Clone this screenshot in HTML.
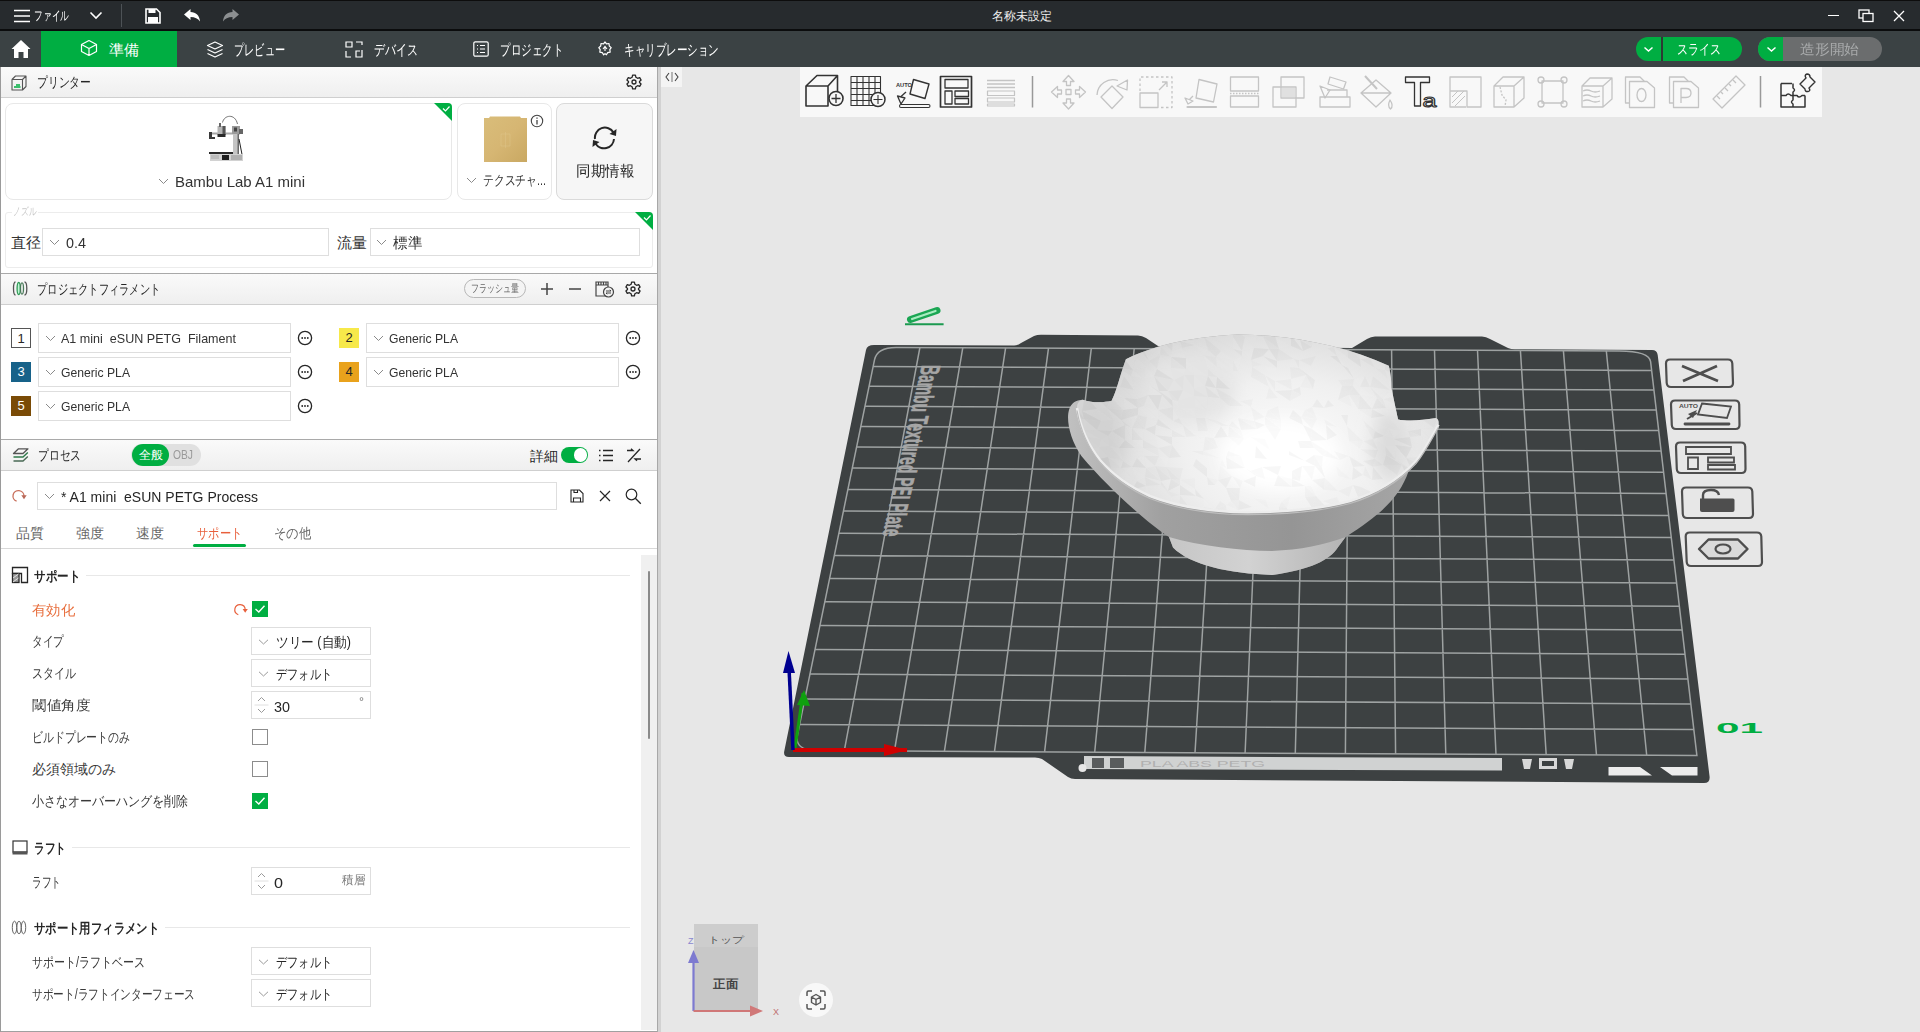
<!DOCTYPE html>
<html><head><meta charset="utf-8">
<style>
*{box-sizing:border-box;margin:0;padding:0}
html,body{width:1920px;height:1032px;overflow:hidden;background:#e7e7e7;font-family:"Liberation Sans",sans-serif;color:#262626}
.a{position:absolute}
.t{position:absolute;white-space:nowrap;line-height:1}
#title{left:0;top:0;width:1920px;height:30px;background:#272b2e;border-top:1px solid #0d0d0d;border-bottom:1px solid #0b0c0d}
#tabs{left:0;top:30px;width:1920px;height:37px;background:#3b4244;border-top:1px solid #0b0c0d}
#left{left:0;top:67px;width:657px;height:965px;background:#fff}
#divl{left:657px;top:67px;width:1px;height:965px;background:#a8a8a8}
#divr{left:658px;top:67px;width:3px;height:965px;background:#d2d2d2}
.hdr{position:absolute;left:1px;width:656px;height:31px;background:linear-gradient(#fafafa,#efefef);border-bottom:1px solid #cfcfcf}
.hdr .t{font-size:14px;color:#262626}
.inp{position:absolute;border:1px solid #dedede;background:#fff;height:29px}
.chev{position:absolute;width:7px;height:7px;border-right:1px solid #9a9a9a;border-bottom:1px solid #9a9a9a;transform:rotate(45deg)}
.lbl{position:absolute;font-size:14px;color:#3a3a3a;white-space:nowrap;line-height:1}
.cb{position:absolute;width:17px;height:17px;border:1px solid #8a8a8a;background:#fff}
.cbon{background:#00ae42;border-color:#00ae42}
.sec{position:absolute;height:1px;background:#ececec}
</style></head><body>
<div id="title" class="a">
 <svg class="a" style="left:13px;top:7px" width="18" height="16" viewBox="0 0 18 16"><path d="M1 2.5H17M1 8H17M1 13.5H17" stroke="#fff" stroke-width="1.6"/></svg>
 <div class="t fit" style="left:34px;top:8px;font-size:13px;color:#fff;--w:35px">ファイル</div>
 <svg class="a" style="left:89px;top:10px" width="14" height="9" viewBox="0 0 14 9"><path d="M1.5 1.5L7 7L12.5 1.5" stroke="#fff" stroke-width="1.6" fill="none"/></svg>
 <div class="a" style="left:121px;top:3px;width:1px;height:23px;background:#4d5256"></div>
 <svg class="a" style="left:144px;top:6px" width="18" height="18" viewBox="0 0 18 18"><path d="M2 2H12.5L16 5.5V16H2Z" stroke="#fff" stroke-width="1.6" fill="none"/><rect x="4.5" y="2" width="7" height="4" fill="#fff"/><rect x="4" y="10" width="10" height="6" fill="#fff"/></svg>
 <svg class="a" style="left:183px;top:7px" width="18" height="16" viewBox="0 0 18 16"><path d="M1 6.5L7.5 1V4C13 4 16.5 7.5 17 13.5C15 10.5 12 9 7.5 9V12Z" fill="#fff"/></svg>
 <svg class="a" style="left:222px;top:7px" width="18" height="16" viewBox="0 0 18 16"><path d="M17 6.5L10.5 1V4C5 4 1.5 7.5 1 13.5C3 10.5 6 9 10.5 9V12Z" fill="#8c8f91"/></svg>
 <div class="t" style="left:992px;top:9px;font-size:12px;color:#f0f0f0">名称未設定</div>
 <div class="a" style="left:1828px;top:14px;width:11px;height:1px;background:#fff"></div>
 <svg class="a" style="left:1858px;top:8px" width="17" height="14" viewBox="0 0 17 14"><rect x="1" y="1" width="10" height="8" stroke="#fff" stroke-width="1.3" fill="none"/><rect x="5" y="4.5" width="10" height="8" stroke="#fff" stroke-width="1.3" fill="#262a2d"/></svg>
 <svg class="a" style="left:1893px;top:9px" width="12" height="12" viewBox="0 0 12 12"><path d="M1 1L11 11M11 1L1 11" stroke="#fff" stroke-width="1.3"/></svg>
</div>
<div id="tabs" class="a">
 <svg class="a" style="left:11px;top:8px" width="20" height="20" viewBox="0 0 20 20"><path d="M10 1L19.5 10H17V19H12.5V13H7.5V19H3V10H0.5Z" fill="#fff"/></svg>
 <div class="a" style="left:41px;top:0;width:136px;height:36px;background:#00ae42"></div>
 <svg class="a" style="left:80px;top:8px" width="18" height="18" viewBox="0 0 18 18"><path d="M9 1.5L16.5 5.5V12.5L9 16.5L1.5 12.5V5.5Z M1.5 5.5L9 9.5L16.5 5.5 M9 9.5V16.5" stroke="#fff" stroke-width="1.2" fill="none" stroke-linejoin="round"/></svg>
 <div class="t fit" style="left:109px;top:11px;font-size:15px;color:#fff;--w:30px">準備</div>
 <svg class="a" style="left:206px;top:10px" width="18" height="17" viewBox="0 0 18 17"><path d="M9 1L16.5 4.5L9 8L1.5 4.5Z M1.5 8.5L9 12L16.5 8.5 M1.5 12.5L9 16L16.5 12.5" stroke="#fff" stroke-width="1.2" fill="none" stroke-linejoin="round"/></svg>
 <div class="t fit" style="left:234px;top:11px;font-size:15px;color:#fff;--w:51px">プレビュー</div>
 <svg class="a" style="left:345px;top:10px" width="18" height="17" viewBox="0 0 18 17"><path d="M1 1H7V6H1Z M11 1H17V4 M17 9V16H11V10H15 M1 10V16H6" stroke="#fff" stroke-width="1.2" fill="none"/></svg>
 <div class="t fit" style="left:374px;top:11px;font-size:15px;color:#fff;--w:44px">デバイス</div>
 <svg class="a" style="left:473px;top:10px" width="16" height="16" viewBox="0 0 16 16"><rect x="0.8" y="0.8" width="14.4" height="14.4" rx="1.5" stroke="#fff" stroke-width="1.2" fill="none"/><path d="M4 4.5H5M4 8H5M4 11.5H5M7 4.5H12M7 8H12M7 11.5H12" stroke="#fff" stroke-width="1.2"/></svg>
 <div class="t fit" style="left:500px;top:11px;font-size:15px;color:#fff;--w:63px">プロジェクト</div>
 <svg class="a" style="left:598px;top:10px" width="14" height="15" viewBox="0 0 14 15"><path d="M7 1L8.5 2.8L11 2.5L11.3 5L13.2 6.6L11.8 8.6L12.2 11.2L9.7 11.6L8.4 13.8L7 12.6L5.6 13.8L4.3 11.6L1.8 11.2L2.2 8.6L0.8 6.6L2.7 5L3 2.5L5.5 2.8Z" stroke="#fff" stroke-width="1.2" fill="none" stroke-linejoin="round"/><path d="M5 8L7 5.5L9 8M7 5.5V10" stroke="#fff" stroke-width="1.1" fill="none"/></svg>
 <div class="t fit" style="left:624px;top:11px;font-size:15px;color:#fff;--w:95px">キャリブレーション</div>
 <div class="a" style="left:1636px;top:6px;width:106px;height:24px;border-radius:12px;background:#00ae42"></div>
 <div class="a" style="left:1661px;top:6px;width:2px;height:24px;background:#2d3a33"></div>
 <svg class="a" style="left:1643px;top:15px" width="11" height="7" viewBox="0 0 11 7"><path d="M1.5 1.5L5.5 5L9.5 1.5" stroke="#fff" stroke-width="1.5" fill="none"/></svg>
 <div class="t fit" style="left:1677px;top:11px;font-size:14px;color:#fff;--w:44px">スライス</div>
 <div class="a" style="left:1758px;top:6px;width:124px;height:24px;border-radius:12px;background:#6b6d6e"></div>
 <div class="a" style="left:1758px;top:6px;width:25px;height:24px;border-radius:12px 0 0 12px;background:#00ae42"></div>
 <svg class="a" style="left:1766px;top:15px" width="11" height="7" viewBox="0 0 11 7"><path d="M1.5 1.5L5.5 5L9.5 1.5" stroke="#fff" stroke-width="1.5" fill="none"/></svg>
 <div class="t fit" style="left:1800px;top:11px;font-size:14px;color:#a9abac;--w:59px">造形開始</div>
</div>
<div id="left" class="a">
 <!-- printer header -->
 <div class="hdr" style="top:0">
  <svg class="a" style="left:10px;top:8px" width="16" height="16" viewBox="0 0 16 16"><path d="M1 4.5H11.5V15H1Z M1 4.5L4.5 1H15V11.5L11.5 15 M11.5 4.5L15 1" stroke="#555" stroke-width="1.1" fill="none" stroke-linejoin="round"/><path d="M3 12H9.5M5 10L9 10" stroke="#00ae42" stroke-width="1.4"/></svg>
  <div class="t fit" style="left:36px;top:8px;--w:54px">プリンター</div>
  <svg class="a" style="left:625px;top:7px" width="16" height="16" viewBox="0 0 16 16"><path d="M6.6 1.2H9.4L9.9 3.3L11.6 4.3L13.7 3.6L15.1 6.1L13.5 7.5V8.5L15.1 9.9L13.7 12.4L11.6 11.7L9.9 12.7L9.4 14.8H6.6L6.1 12.7L4.4 11.7L2.3 12.4L0.9 9.9L2.5 8.5V7.5L0.9 6.1L2.3 3.6L4.4 4.3L6.1 3.3Z" stroke="#262626" stroke-width="1.3" fill="none" stroke-linejoin="round"/><circle cx="8" cy="8" r="2" stroke="#262626" stroke-width="1.3" fill="none"/></svg>
 </div>
 <!-- printer card -->
 <div class="a" style="left:5px;top:36px;width:447px;height:97px;border:1px solid #e8e8e8;border-radius:8px;background:#fff"></div>
 <svg class="a" style="left:434px;top:36px" width="18" height="18" viewBox="0 0 18 18"><path d="M0 0H14Q18 0 18 4V18Z" fill="#00ae42"/><path d="M9 5.5L11.5 8L15.5 3.5" stroke="#fff" stroke-width="1.2" fill="none"/></svg>
 <svg class="a" style="left:207px;top:46px" width="40" height="52" viewBox="0 0 40 52">
  <path d="M15.5,9.5 C17,2 28,0 30.5,11" stroke="#666" stroke-width="0.9" fill="none"/>
  <rect x="3" y="19.5" width="30" height="2" fill="#a8a8a8"/>
  <rect x="2" y="19" width="3" height="6" fill="#3a3a3a"/><rect x="2" y="24" width="6" height="2" fill="#3a3a3a"/>
  <rect x="10.5" y="13" width="8" height="9" fill="#b5b5b5"/><rect x="15.5" y="13" width="3" height="9" fill="#555"/><rect x="10.5" y="21" width="8" height="3" fill="#2a2a2a"/>
  <rect x="12" y="10" width="2" height="4" fill="#666"/>
  <rect x="26" y="13" width="6" height="32" fill="#c4c4c4"/><rect x="30.5" y="13" width="1.5" height="32" fill="#6a6a6a"/>
  <rect x="25" y="13" width="8" height="8" fill="#9a9a9a"/><rect x="27" y="14.5" width="3" height="4" fill="#444"/>
  <rect x="32" y="16" width="4" height="5" fill="#666"/>
  <path d="M32,26 L35.5,44" stroke="#222" stroke-width="1"/>
  <rect x="2" y="39" width="24" height="2" fill="#2a2a2a"/>
  <rect x="3" y="41" width="33" height="7" fill="#d2d2d2"/><rect x="15" y="42" width="7" height="5" fill="#1e1e1e"/><rect x="4" y="42" width="8" height="4" fill="#bdbdbd"/><rect x="24" y="42" width="11" height="5" fill="#b0b0b0"/>
 </svg>
 <svg class="a" style="left:158px;top:111px" width="11" height="7" viewBox="0 0 11 7"><path d="M1 1L5.5 5.5L10 1" stroke="#8a8a8a" stroke-width="1" fill="none"/></svg>
 <div class="t fit" style="left:175px;top:107px;font-size:15px;color:#333;--w:130px">Bambu Lab A1 mini</div>
 <!-- plate card -->
 <div class="a" style="left:457px;top:36px;width:95px;height:97px;border:1px solid #e8e8e8;border-radius:8px;background:#fff"></div>
 <svg class="a" style="left:483px;top:49px" width="45" height="47" viewBox="0 0 45 47"><defs><linearGradient id="plg" x1="0" y1="0" x2="1" y2="1"><stop offset="0" stop-color="#d9bd7a"/><stop offset="0.5" stop-color="#d6b673"/><stop offset="1" stop-color="#c9a862"/></linearGradient></defs><path d="M1,2 H6 L7,0.5 H37 L38,2 H44 V46 H1Z" fill="url(#plg)"/><path d="M18,18 H27 V30 H18Z M22.5,16 V32" stroke="#e2cb92" stroke-width="0.6" fill="none" opacity="0.6"/></svg>
 <svg class="a" style="left:530px;top:47px" width="14" height="14" viewBox="0 0 14 14"><circle cx="7" cy="7" r="5.7" stroke="#444" stroke-width="1.1" fill="none"/><path d="M7 6V10.5M7 3.5V4.8" stroke="#444" stroke-width="1.3"/></svg>
 <svg class="a" style="left:466px;top:110px" width="11" height="7" viewBox="0 0 11 7"><path d="M1 1L5.5 5.5L10 1" stroke="#8a8a8a" stroke-width="1" fill="none"/></svg>
 <div class="t fit" style="left:483px;top:106px;font-size:14px;color:#333;--w:63px">テクスチャ...</div>
 <!-- sync -->
 <div class="a" style="left:556px;top:36px;width:97px;height:97px;border:1px solid #dadada;border-radius:8px;background:#f6f6f6"></div>
 <svg class="a" style="left:589px;top:59px" width="31" height="24" viewBox="0 0 31 24"><path d="M6 13A10 10 0 0 1 24.5 6.5" stroke="#262626" stroke-width="2" fill="none"/><path d="M25 13A10 10 0 0 1 6.5 17.5" stroke="#262626" stroke-width="2" fill="none"/><path d="M27.5 3L27 10L20.5 8Z" fill="#262626"/><path d="M3.5 21L4 14L10.5 16Z" fill="#262626"/></svg>
 <div class="t fit" style="left:576px;top:96px;font-size:15px;color:#262626;--w:58px">同期情報</div>
 <!-- nozzle -->
 <div class="a" style="left:5px;top:145px;width:648px;height:56px;border:1px solid #ececec;border-radius:3px"></div>
 <div class="t fit" style="left:12px;top:139px;font-size:11px;color:#c8c8c8;background:#fff;padding:0 2px;--w:26px">ノズル</div>
 <svg class="a" style="left:635px;top:145px" width="18" height="18" viewBox="0 0 18 18"><path d="M0 0H14Q18 0 18 4V18Z" fill="#00ae42"/><path d="M9 5.5L11.5 8L15.5 3.5" stroke="#fff" stroke-width="1.2" fill="none"/></svg>
 <div class="t fit" style="left:11px;top:168px;font-size:15px;color:#333;--w:30px">直径</div>
 <div class="inp" style="left:42px;top:161px;width:287px;height:28px"></div>
 <svg class="a" style="left:49px;top:172px" width="11" height="7" viewBox="0 0 11 7"><path d="M1 1L5.5 5.5L10 1" stroke="#8a8a8a" stroke-width="1" fill="none"/></svg>
 <div class="t fit" style="left:66px;top:169px;font-size:14px;color:#333;--w:20px">0.4</div>
 <div class="t fit" style="left:337px;top:168px;font-size:15px;color:#333;--w:30px">流量</div>
 <div class="inp" style="left:370px;top:161px;width:270px;height:28px"></div>
 <svg class="a" style="left:376px;top:172px" width="11" height="7" viewBox="0 0 11 7"><path d="M1 1L5.5 5.5L10 1" stroke="#8a8a8a" stroke-width="1" fill="none"/></svg>
 <div class="t fit" style="left:393px;top:168px;font-size:15px;color:#333;--w:29px">標準</div>

 <!-- filament header -->
 <div class="hdr" style="top:206px;border-top:1px solid #a9a9a9;height:32px">
  <svg class="a" style="left:11px;top:6px" width="17" height="17" viewBox="0 0 17 17"><path d="M3.5,2 Q1.5,2 1.5,8.5 Q1.5,15 3.5,15" stroke="#555" stroke-width="1.3" fill="none"/><ellipse cx="6.7" cy="8.5" rx="1.6" ry="6" stroke="#2e9a55" stroke-width="1.3" fill="#c0f5d5"/><ellipse cx="10" cy="8.5" rx="1.5" ry="5.6" stroke="#4a7a5a" stroke-width="1.3" fill="none"/><path d="M12.5,2 Q14.8,2 14.8,8.5 Q14.8,15 12.5,15" stroke="#555" stroke-width="1.3" fill="none"/></svg>
  <div class="t fit" style="left:36px;top:8px;--w:123px">プロジェクトフィラメント</div>
  <div class="a" style="left:463px;top:5px;width:62px;height:19px;border:1px solid #b8b8b8;border-radius:10px;background:#f4f4f4"></div>
  <div class="t fit" style="left:470px;top:9px;font-size:11px;color:#666;--w:48px">フラッシュ量</div>
  <svg class="a" style="left:539px;top:8px" width="14" height="14" viewBox="0 0 14 14"><path d="M7 1V13M1 7H13" stroke="#444" stroke-width="1.5"/></svg>
  <svg class="a" style="left:567px;top:8px" width="14" height="14" viewBox="0 0 14 14"><path d="M1 7H13" stroke="#444" stroke-width="1.5"/></svg>
  <svg class="a" style="left:594px;top:6px" width="20" height="18" viewBox="0 0 20 18"><path d="M1 5H13V16H1Z M1 5V2H13V5 M3.5 2V5M6 2V5M8.5 2V5M11 2V5" stroke="#444" stroke-width="1.2" fill="none"/><circle cx="13.5" cy="12" r="5" fill="#f2f2f2" stroke="#444" stroke-width="1.2"/><path d="M11 11H16L14.8 9.8M16 13H11L12.2 14.2" stroke="#444" stroke-width="1" fill="none"/></svg>
  <svg class="a" style="left:624px;top:7px" width="16" height="16" viewBox="0 0 16 16"><path d="M6.6 1.2H9.4L9.9 3.3L11.6 4.3L13.7 3.6L15.1 6.1L13.5 7.5V8.5L15.1 9.9L13.7 12.4L11.6 11.7L9.9 12.7L9.4 14.8H6.6L6.1 12.7L4.4 11.7L2.3 12.4L0.9 9.9L2.5 8.5V7.5L0.9 6.1L2.3 3.6L4.4 4.3L6.1 3.3Z" stroke="#262626" stroke-width="1.3" fill="none" stroke-linejoin="round"/><circle cx="8" cy="8" r="2" stroke="#262626" stroke-width="1.3" fill="none"/></svg>
 </div>
<div class="a" style="left:11px;top:261px;width:20px;height:20px;background:#fff;border:1px solid #555;color:#262626;font-size:13px;text-align:center;line-height:18px;padding-top:1px">1</div><div class="inp" style="left:38px;top:256px;width:253px;height:30px"></div><svg class="a" style="left:45px;top:268px" width="11" height="7" viewBox="0 0 11 7"><path d="M1 1L5.5 5.5L10 1" stroke="#8a8a8a" stroke-width="1" fill="none"/></svg><div class="t fit" style="left:61px;top:265px;font-size:13px;color:#333;--w:175px">A1 mini&nbsp;&nbsp;eSUN PETG&nbsp;&nbsp;Filament</div><svg class="a" style="left:297px;top:263px" width="16" height="16" viewBox="0 0 16 16"><circle cx="8" cy="8" r="6.6" stroke="#262626" stroke-width="1.3" fill="none"/><circle cx="5.2" cy="8" r="0.9" fill="#262626"/><circle cx="8" cy="8" r="0.9" fill="#262626"/><circle cx="10.8" cy="8" r="0.9" fill="#262626"/></svg><div class="a" style="left:339px;top:261px;width:20px;height:20px;background:#f7e94a;border:0;color:#262626;font-size:13px;text-align:center;line-height:18px;padding-top:1px">2</div><div class="inp" style="left:366px;top:256px;width:253px;height:30px"></div><svg class="a" style="left:373px;top:268px" width="11" height="7" viewBox="0 0 11 7"><path d="M1 1L5.5 5.5L10 1" stroke="#8a8a8a" stroke-width="1" fill="none"/></svg><div class="t fit" style="left:389px;top:265px;font-size:13px;color:#333;--w:69px">Generic PLA</div><svg class="a" style="left:625px;top:263px" width="16" height="16" viewBox="0 0 16 16"><circle cx="8" cy="8" r="6.6" stroke="#262626" stroke-width="1.3" fill="none"/><circle cx="5.2" cy="8" r="0.9" fill="#262626"/><circle cx="8" cy="8" r="0.9" fill="#262626"/><circle cx="10.8" cy="8" r="0.9" fill="#262626"/></svg><div class="a" style="left:11px;top:295px;width:20px;height:20px;background:#176289;border:0;color:#fff;font-size:13px;text-align:center;line-height:18px;padding-top:1px">3</div><div class="inp" style="left:38px;top:290px;width:253px;height:30px"></div><svg class="a" style="left:45px;top:302px" width="11" height="7" viewBox="0 0 11 7"><path d="M1 1L5.5 5.5L10 1" stroke="#8a8a8a" stroke-width="1" fill="none"/></svg><div class="t fit" style="left:61px;top:299px;font-size:13px;color:#333;--w:69px">Generic PLA</div><svg class="a" style="left:297px;top:297px" width="16" height="16" viewBox="0 0 16 16"><circle cx="8" cy="8" r="6.6" stroke="#262626" stroke-width="1.3" fill="none"/><circle cx="5.2" cy="8" r="0.9" fill="#262626"/><circle cx="8" cy="8" r="0.9" fill="#262626"/><circle cx="10.8" cy="8" r="0.9" fill="#262626"/></svg><div class="a" style="left:339px;top:295px;width:20px;height:20px;background:#e9a21c;border:0;color:#262626;font-size:13px;text-align:center;line-height:18px;padding-top:1px">4</div><div class="inp" style="left:366px;top:290px;width:253px;height:30px"></div><svg class="a" style="left:373px;top:302px" width="11" height="7" viewBox="0 0 11 7"><path d="M1 1L5.5 5.5L10 1" stroke="#8a8a8a" stroke-width="1" fill="none"/></svg><div class="t fit" style="left:389px;top:299px;font-size:13px;color:#333;--w:69px">Generic PLA</div><svg class="a" style="left:625px;top:297px" width="16" height="16" viewBox="0 0 16 16"><circle cx="8" cy="8" r="6.6" stroke="#262626" stroke-width="1.3" fill="none"/><circle cx="5.2" cy="8" r="0.9" fill="#262626"/><circle cx="8" cy="8" r="0.9" fill="#262626"/><circle cx="10.8" cy="8" r="0.9" fill="#262626"/></svg><div class="a" style="left:11px;top:329px;width:20px;height:20px;background:#7a4b06;border:0;color:#fff;font-size:13px;text-align:center;line-height:18px;padding-top:1px">5</div><div class="inp" style="left:38px;top:324px;width:253px;height:30px"></div><svg class="a" style="left:45px;top:336px" width="11" height="7" viewBox="0 0 11 7"><path d="M1 1L5.5 5.5L10 1" stroke="#8a8a8a" stroke-width="1" fill="none"/></svg><div class="t fit" style="left:61px;top:333px;font-size:13px;color:#333;--w:69px">Generic PLA</div><svg class="a" style="left:297px;top:331px" width="16" height="16" viewBox="0 0 16 16"><circle cx="8" cy="8" r="6.6" stroke="#262626" stroke-width="1.3" fill="none"/><circle cx="5.2" cy="8" r="0.9" fill="#262626"/><circle cx="8" cy="8" r="0.9" fill="#262626"/><circle cx="10.8" cy="8" r="0.9" fill="#262626"/></svg>
 <!-- process header -->
 <div class="hdr" style="top:372px;border-top:1px solid #a9a9a9;height:32px">
  <svg class="a" style="left:11px;top:8px" width="17" height="15" viewBox="0 0 17 15"><path d="M1.5,5.5 L6.5,0.8 H16 L11,5.5Z" stroke="#555" stroke-width="1.3" fill="none" stroke-linejoin="round"/><path d="M1.5,9 H11 L15.8,4.5" stroke="#2f7a4a" stroke-width="1.4" fill="none"/><path d="M1.5,13 H11 L15.8,8.5" stroke="#4a6a55" stroke-width="1.4" fill="none"/></svg>
  <div class="t fit" style="left:37px;top:8px;--w:43px">プロセス</div>
  <div class="a" style="left:130px;top:4px;width:70px;height:22px;border-radius:11px;background:#e0e0e0"></div>
  <div class="a" style="left:131px;top:4px;width:37px;height:22px;border-radius:11px;background:#00ae42"></div>
  <div class="t fit" style="left:138px;top:9px;font-size:12px;color:#fff;--w:24px">全般</div>
  <div class="t fit" style="left:172px;top:9px;font-size:12px;color:#999;--w:20px">OBJ</div>
  <div class="t fit" style="left:529px;top:9px;font-size:14px;color:#262626;--w:28px">詳細</div>
  <div class="a" style="left:560px;top:7px;width:27px;height:16px;border-radius:8px;background:#00ae42"></div>
  <div class="a" style="left:573px;top:8px;width:13px;height:14px;border-radius:7px;background:#fff"></div>
  <svg class="a" style="left:597px;top:9px" width="16" height="13" viewBox="0 0 16 13"><path d="M1 1.5H2.5M1 6.5H2.5M1 11.5H2.5M5 1.5H15M5 6.5H15M5 11.5H15" stroke="#262626" stroke-width="1.4"/></svg>
  <svg class="a" style="left:625px;top:8px" width="16" height="15" viewBox="0 0 16 15"><path d="M2 14L14 1 M1 2.5H7L5 0.8M15 11H9L11 12.8" stroke="#262626" stroke-width="1.3" fill="none"/></svg>
 </div>
 <svg class="a" style="left:11px;top:421px" width="18" height="16" viewBox="0 0 18 16"><path d="M5.6,13.2 A5.5,5.5 0 1 1 13,8" stroke="#c9705c" stroke-width="1.3" fill="none"/><path d="M10.3,7.3 L15.7,7.3 L13,11.2Z" fill="#b86858"/></svg>
 <div class="inp" style="left:37px;top:415px;width:520px;height:28px"></div>
 <svg class="a" style="left:44px;top:426px" width="11" height="7" viewBox="0 0 11 7"><path d="M1 1L5.5 5.5L10 1" stroke="#8a8a8a" stroke-width="1" fill="none"/></svg>
 <div class="t fit" style="left:61px;top:422px;font-size:15px;color:#262626;--w:197px">* A1 mini&nbsp;&nbsp;eSUN PETG Process</div>
 <svg class="a" style="left:570px;top:422px" width="14" height="14" viewBox="0 0 14 14"><path d="M1 1H9.5L13 4.5V13H1Z M3.5 13V9H10.5V13 M4 1V3.5H7.5V1" stroke="#262626" stroke-width="1.1" fill="none"/></svg>
 <svg class="a" style="left:599px;top:423px" width="12" height="12" viewBox="0 0 12 12"><path d="M1 1L11 11M11 1L1 11" stroke="#262626" stroke-width="1.2"/></svg>
 <svg class="a" style="left:625px;top:421px" width="17" height="17" viewBox="0 0 17 17"><circle cx="6.5" cy="6.5" r="5.3" stroke="#262626" stroke-width="1.2" fill="none"/><path d="M10.3 10.3L15.8 15.8" stroke="#262626" stroke-width="1.3"/></svg>
 <div class="t fit" style="left:16px;top:459px;font-size:14px;color:#666;--w:28px">品質</div>
 <div class="t fit" style="left:76px;top:459px;font-size:14px;color:#666;--w:28px">強度</div>
 <div class="t fit" style="left:136px;top:459px;font-size:14px;color:#666;--w:28px">速度</div>
 <div class="t fit" style="left:197px;top:459px;font-size:14px;color:#e8603c;--w:45px">サポート</div>
 <div class="t fit" style="left:274px;top:459px;font-size:14px;color:#666;--w:37px">その他</div>
 <div class="a" style="left:193px;top:477px;width:53px;height:3px;border-radius:2px;background:#00ae42"></div>
 <div class="a" style="left:1px;top:481px;width:656px;height:1px;background:#d8d8d8"></div>
<!-- settings -->
<div class="a" style="left:641px;top:488px;width:16px;height:475px;background:#f0f0f0"></div>
<div class="a" style="left:648px;top:504px;width:2px;height:168px;border-radius:1px;background:#8a8a8a"></div>
<svg class="a" style="left:11px;top:499px" width="18" height="18" viewBox="0 0 18 18"><path d="M1.5,1.5 H16.5 V16.5 H10.5 V7.5 H1.5 Z" stroke="#262626" stroke-width="1.3" fill="#fff"/><rect x="1.5" y="7.5" width="6.5" height="9" stroke="#262626" stroke-width="1.3" fill="#9a9a9a"/><path d="M2,12 L7.5,8 M2,16 L7.5,12" stroke="#e0e0e0" stroke-width="1"/></svg>
<div class="t fit" style="left:34px;top:502px;font-size:14px;color:#262626;font-weight:bold;--w:46px">サポート</div>
<div class="a" style="left:86px;top:508px;width:544px;height:1px;background:#e8e8e8"></div>
<div class="t fit" style="left:32px;top:536px;font-size:14px;color:#e8703f;--w:43px">有効化</div>
<svg class="a" style="left:232px;top:535px" width="18" height="16" viewBox="0 0 18 16"><path d="M6.3,12.7 A5.2,5.2 0 1 1 13.2,7.5" stroke="#e8603c" stroke-width="1.2" fill="none"/><path d="M10.6,7 L15.8,7 L13.2,10.8Z" fill="#e8603c"/></svg>
<svg class="a" style="left:252px;top:534px" width="16" height="16" viewBox="0 0 16 16"><rect width="16" height="16" fill="#00ae42"/><path d="M3.5 8L6.8 11L12.5 4.8" stroke="#fff" stroke-width="1.4" fill="none"/></svg>
<div class="t fit" style="left:32px;top:567px;font-size:14px;color:#3a3a3a;--w:32px">タイプ</div>
<div class="inp" style="left:251px;top:560px;width:120px;height:28px"></div>
<svg class="a" style="left:258px;top:572px" width="11" height="6" viewBox="0 0 11 6"><path d="M1 0.8L5.5 5L10 0.8" stroke="#9a9a9a" stroke-width="1" fill="none"/></svg>
<div class="t fit" style="left:276px;top:568px;font-size:14px;color:#262626;--w:75px">ツリー (自動)</div>
<div class="t fit" style="left:32px;top:599px;font-size:14px;color:#3a3a3a;--w:44px">スタイル</div>
<div class="inp" style="left:251px;top:592px;width:120px;height:28px"></div>
<svg class="a" style="left:258px;top:604px" width="11" height="6" viewBox="0 0 11 6"><path d="M1 0.8L5.5 5L10 0.8" stroke="#9a9a9a" stroke-width="1" fill="none"/></svg>
<div class="t fit" style="left:276px;top:600px;font-size:14px;color:#262626;--w:56px">デフォルト</div>
<div class="t fit" style="left:32px;top:631px;font-size:14px;color:#3a3a3a;--w:58px">閾値角度</div>
<div class="inp" style="left:251px;top:624px;width:120px;height:28px"></div>
<svg class="a" style="left:254px;top:628px" width="15" height="20" viewBox="0 0 15 20"><path d="M4 6L7.5 2.5L11 6M4 14L7.5 17.5L11 14" stroke="#9a9a9a" stroke-width="1" fill="none"/><path d="M0.5 10H14.5" stroke="#e0e0e0" stroke-width="1"/></svg>
<div class="t fit" style="left:274px;top:633px;font-size:14px;color:#262626;--w:16px">30</div>
<div class="t fit" style="left:359px;top:630px;font-size:10px;color:#777;--w:5px">°</div>
<div class="t fit" style="left:32px;top:663px;font-size:14px;color:#3a3a3a;--w:98px">ビルドプレートのみ</div>
<div class="a" style="left:252px;top:662px;width:16px;height:16px;border:1px solid #8c8c8c;background:#fff"></div>
<div class="t fit" style="left:32px;top:695px;font-size:14px;color:#3a3a3a;--w:84px">必須領域のみ</div>
<div class="a" style="left:252px;top:694px;width:16px;height:16px;border:1px solid #8c8c8c;background:#fff"></div>
<div class="t fit" style="left:32px;top:727px;font-size:14px;color:#3a3a3a;--w:156px">小さなオーバーハングを削除</div>
<svg class="a" style="left:252px;top:726px" width="16" height="16" viewBox="0 0 16 16"><rect width="16" height="16" fill="#00ae42"/><path d="M3.5 8L6.8 11L12.5 4.8" stroke="#fff" stroke-width="1.4" fill="none"/></svg>
<svg class="a" style="left:12px;top:773px" width="16" height="15" viewBox="0 0 16 15"><rect x="1" y="1" width="14" height="11" stroke="#333" stroke-width="1.2" fill="none"/><rect x="0.5" y="11.5" width="15" height="3" fill="#555"/></svg>
<div class="t fit" style="left:34px;top:774px;font-size:14px;color:#262626;font-weight:bold;--w:32px">ラフト</div>
<div class="a" style="left:72px;top:780px;width:558px;height:1px;background:#e8e8e8"></div>
<div class="t fit" style="left:32px;top:808px;font-size:14px;color:#3a3a3a;--w:29px">ラフト</div>
<div class="inp" style="left:251px;top:800px;width:120px;height:28px"></div>
<svg class="a" style="left:254px;top:804px" width="15" height="20" viewBox="0 0 15 20"><path d="M4 6L7.5 2.5L11 6M4 14L7.5 17.5L11 14" stroke="#9a9a9a" stroke-width="1" fill="none"/><path d="M0.5 10H14.5" stroke="#e0e0e0" stroke-width="1"/></svg>
<div class="t fit" style="left:274px;top:809px;font-size:14px;color:#262626;--w:9px">0</div>
<div class="t fit" style="left:342px;top:807px;font-size:12px;color:#777;--w:23px">積層</div>
<svg class="a" style="left:11px;top:853px" width="16" height="15" viewBox="0 0 16 15"><ellipse cx="3.5" cy="7.5" rx="2.2" ry="6.3" stroke="#666" stroke-width="1" fill="none"/><ellipse cx="8" cy="7.5" rx="2.2" ry="6.3" stroke="#666" stroke-width="1" fill="none"/><ellipse cx="12.5" cy="7.5" rx="2.2" ry="6.3" stroke="#666" stroke-width="1" fill="none"/></svg>
<div class="t fit" style="left:34px;top:854px;font-size:14px;color:#262626;font-weight:bold;--w:125px">サポート用フィラメント</div>
<div class="a" style="left:165px;top:860px;width:465px;height:1px;background:#e8e8e8"></div>
<div class="t fit" style="left:32px;top:888px;font-size:14px;color:#3a3a3a;--w:113px">サポート/ラフトベース</div>
<div class="inp" style="left:251px;top:880px;width:120px;height:28px"></div>
<svg class="a" style="left:258px;top:892px" width="11" height="6" viewBox="0 0 11 6"><path d="M1 0.8L5.5 5L10 0.8" stroke="#9a9a9a" stroke-width="1" fill="none"/></svg>
<div class="t fit" style="left:276px;top:888px;font-size:14px;color:#262626;--w:56px">デフォルト</div>
<div class="t fit" style="left:32px;top:920px;font-size:14px;color:#3a3a3a;--w:163px">サポート/ラフトインターフェース</div>
<div class="inp" style="left:251px;top:912px;width:120px;height:28px"></div>
<svg class="a" style="left:258px;top:924px" width="11" height="6" viewBox="0 0 11 6"><path d="M1 0.8L5.5 5L10 0.8" stroke="#9a9a9a" stroke-width="1" fill="none"/></svg>
<div class="t fit" style="left:276px;top:920px;font-size:14px;color:#262626;--w:56px">デフォルト</div>
<div class="a" style="left:1px;top:964px;width:656px;height:1px;background:#a0a0a0"></div>

</div>
<svg class="a" style="left:661px;top:67px" width="1259" height="965" viewBox="661 67 1259 965">
<defs>
 <linearGradient id="wall" x1="0" y1="0" x2="1" y2="0"><stop offset="0" stop-color="#b4b4b4"/><stop offset="0.45" stop-color="#9a9a9a"/><stop offset="1" stop-color="#b0b0b0"/></linearGradient>
 <linearGradient id="foot" x1="0" y1="0" x2="1" y2="0"><stop offset="0" stop-color="#c8c8c8"/><stop offset="0.5" stop-color="#d6d6d6"/><stop offset="1" stop-color="#bdbdbd"/></linearGradient>
 <radialGradient id="inner" cx="0.6" cy="0.65" r="0.6"><stop offset="0" stop-color="#fbfbfb"/><stop offset="0.6" stop-color="#f0f0f0"/><stop offset="1" stop-color="#dedede"/></radialGradient>
</defs>
<path d="M874,345 L1014,345.5 Q1018,345.5 1021,343 L1034,336 Q1037,334.8 1041,334.8 L1138,335.5 Q1142,335.6 1146,338 L1158,346 L1352,348 L1367,339 Q1371,336.5 1375,336.5 L1482,336.5 Q1486,336.6 1490,339 L1508,348 Q1511,349.2 1515,349.2 L1652,350 Q1657,350 1657.7,355 L1709.5,776 Q1710.5,783 1704,783 L1075,779 Q1071,779 1068,777 L1042,759 Q1039,757.5 1035,757.5 L789,757 Q783,757 784.3,751 L866,350 Q867,345 874,345 Z" fill="#3d4142"/>
<path d="M919.9,347.5L844.3,750.7 M962.8,347.7L894.4,751.0 M1005.6,347.9L944.4,751.3 M1048.5,348.1L994.5,751.6 M1091.3,348.3L1044.6,751.8 M1134.2,348.5L1094.7,752.1 M1177.1,348.7L1144.8,752.4 M1219.9,348.9L1195.0,752.7 M1262.8,349.1L1245.1,753.0 M1305.7,349.4L1295.3,753.3 M1348.7,349.6L1345.4,753.6 M1391.6,349.8L1395.6,753.9 M1434.5,350.0L1445.8,754.2 M1477.5,350.2L1496.0,754.4 M1520.4,350.4L1546.2,754.7 M1563.4,350.6L1596.5,755.0 M1606.3,350.8L1646.7,755.3 M873.1,366.6L1651.6,370.4 M869.1,386.2L1653.9,390.1 M865.0,406.2L1656.3,410.1 M860.8,426.5L1658.7,430.5 M856.6,447.1L1661.1,451.1 M852.3,468.1L1663.6,472.2 M847.9,489.4L1666.1,493.6 M843.4,511.1L1668.7,515.4 M838.9,533.2L1671.3,537.5 M834.3,555.6L1673.9,560.1 M829.6,578.5L1676.6,583.0 M824.8,601.7L1679.4,606.3 M819.9,625.4L1682.2,630.1 M815.0,649.5L1685.0,654.3 M809.9,674.0L1687.9,678.9 M804.8,699.0L1690.9,704.0 M799.6,724.5L1693.9,729.6" stroke="#9ea2a2" stroke-width="1.5" fill="none"/>
<path d="M874.5,359.8 Q877.1,347.3 896.4,347.4 L1619.2,350.9 Q1649.3,351.0 1650.6,361.6 L1696.9,755.6 L816.8,750.5 Q794.2,750.4 797.5,734.8 Z" stroke="#9ea2a2" stroke-width="1.5" fill="none"/>
<!-- label strip -->
<path d="M1084,756 L1502,758 L1502,770.5 L1084,769 Z" fill="#d0d2d2"/>
<circle cx="1082.5" cy="768" r="4" fill="#e6e6e6"/>
<path d="M1092,758H1104V768H1092Z M1110,758H1124V768H1110Z" fill="#3b3e40" opacity="0.8"/>
<text x="1140" y="767" font-family="Liberation Sans" font-size="9" fill="#b0b0b0" textLength="125" lengthAdjust="spacingAndGlyphs">PLA ABS PETG</text>
<path d="M1522,759H1532L1530,769H1524Z M1539,758H1557V769H1539Z M1564,759H1574L1572,769H1566Z" fill="#d8d8d8"/>
<path d="M1542,761H1554V766H1542Z" fill="#3d4142"/>
<path d="M1608.5,767H1640L1652,775.5H1608.5Z M1660,767H1697.5V775.5H1672Z" fill="#ececec"/>
<!-- bed text -->
<text transform="matrix(-0.225 0.974 -1 0 922 365)" font-family="Liberation Sans" font-weight="bold" font-size="27" fill="#a6a6a6" stroke="#a6a6a6" stroke-width="0.6" textLength="176" lengthAdjust="spacingAndGlyphs">Bambu Textured PEI Plate</text>
<!-- axes -->
<path d="M793,750 L907,750" stroke="#d00000" stroke-width="4"/>
<path d="M884,744 L908,750 L884,756Z" fill="#d00000"/>
<path d="M803,693 L795,748" stroke="#0fa00f" stroke-width="3"/>
<path d="M797,705 L804,690 L810,706Z" fill="#0fa00f"/>
<path d="M789,668 L793,750" stroke="#000090" stroke-width="3.5"/>
<path d="M783,673 L788.5,651 L795,673Z" fill="#000090"/>
<!-- green pill label -->
<path d="M910.5,319.5 L937,310.5" stroke="#1aa653" stroke-width="7" stroke-linecap="round"/>
<path d="M912,319 L935.5,311" stroke="#a8ecc0" stroke-width="2.2" stroke-linecap="round"/>
<path d="M905,324.3H943.6" stroke="#1c9a50" stroke-width="2"/>
<!-- "01" -->
<text x="1716" y="733" font-family="Liberation Sans" font-weight="bold" font-size="15" fill="#00ae42" textLength="47" lengthAdjust="spacingAndGlyphs">01</text>
<!-- bowl -->
<defs>
 <linearGradient id="wall2" x1="1070" y1="0" x2="1440" y2="0" gradientUnits="userSpaceOnUse"><stop offset="0" stop-color="#c0c0c0"/><stop offset="0.25" stop-color="#a0a0a0"/><stop offset="0.6" stop-color="#959595"/><stop offset="1" stop-color="#aaaaaa"/></linearGradient>
 <linearGradient id="foot2" x1="1169" y1="0" x2="1346" y2="0" gradientUnits="userSpaceOnUse"><stop offset="0" stop-color="#c6c6c6"/><stop offset="0.45" stop-color="#d2d2d2"/><stop offset="1" stop-color="#b4b4b4"/></linearGradient>
 <radialGradient id="in2" cx="1285" cy="450" r="200" gradientUnits="userSpaceOnUse" gradientTransform="translate(1285 450) scale(1 0.7) translate(-1285 -450)"><stop offset="0" stop-color="#fdfdfd"/><stop offset="0.5" stop-color="#f0f0f0"/><stop offset="1" stop-color="#d6d6d6"/></radialGradient>
 <filter id="blur6" x="-50%" y="-50%" width="200%" height="200%"><feGaussianBlur stdDeviation="8"/></filter>
 <clipPath id="silclip"><path d="M1125.9,359.2 C1150,347 1185,337 1238.4,334.4 C1290,335 1345,345 1388.8,365.8 C1391,375 1391.4,382 1391.4,388 L1398,419.4 C1405,421 1420,421 1435.9,418.1 C1438,419 1439,421 1438.5,424.6 C1432,436 1425,450 1416,461 C1400,478 1380,492 1350,501 C1320,509 1280,513 1233,512 C1200,510 1170,504 1150,496 C1130,487 1112,474 1100,460 C1088,445 1080,425 1077,408 C1077,403 1079,401 1082.7,399.8 C1095,404 1105,402 1111.5,401.1 C1117,390 1120,375 1125.9,359.2 Z"/></clipPath><clipPath id="inclip"><path d="M1125.9,359.2 C1150,347 1185,337 1238.4,334.4 C1290,335 1345,345 1388.8,365.8 C1391,375 1391.4,382 1391.4,388 L1398,419.4 C1405,421 1420,421 1435.9,418.1 C1438,419 1439,421 1438.5,424.6 C1432,436 1425,450 1416,461 C1400,478 1380,492 1350,501 C1320,509 1280,513 1233,512 C1200,510 1170,504 1150,496 C1130,487 1112,474 1100,460 C1088,445 1080,425 1077,408 C1077,403 1079,401 1082.7,399.8 C1095,404 1105,402 1111.5,401.1 C1117,390 1120,375 1125.9,359.2 Z"/></clipPath>
</defs>
<path d="M1125.9,359.2 C1150,347 1185,337 1238.4,334.4 C1290,335 1345,345 1388.8,365.8 C1391,375 1391.4,382 1391.4,388 L1398,419.4 C1405,421 1420,421 1435.9,418.1 C1438,419 1439,421 1438.5,424.6 C1430,440 1420,455 1408.4,471.7 C1400,495 1385,512 1345.6,537.1 L1337.8,547.6 C1330,560 1310,570 1272.4,575 C1230,574 1190,565 1173,547.6 L1169,537.1 C1150,525 1110,490 1081.4,456 C1070,440 1066,420 1069,410 C1071,403 1076,400 1082.7,399.8 C1095,404 1105,402 1111.5,401.1 C1117,390 1120,375 1125.9,359.2 Z" fill="url(#wall2)"/>
<path d="M1169,537.1 C1200,546 1240,551 1272,551 C1300,550 1325,545 1345.6,537.1 L1337.8,547.6 C1330,560 1310,570 1272.4,575 C1230,574 1190,565 1173,547.6 Z" fill="url(#foot2)"/>
<path d="M1125.9,359.2 C1150,347 1185,337 1238.4,334.4 C1290,335 1345,345 1388.8,365.8 C1391,375 1391.4,382 1391.4,388 L1398,419.4 C1405,421 1420,421 1435.9,418.1 C1438,419 1439,421 1438.5,424.6 C1432,436 1425,450 1416,461 C1400,478 1380,492 1350,501 C1320,509 1280,513 1233,512 C1200,510 1170,504 1150,496 C1130,487 1112,474 1100,460 C1088,445 1080,425 1077,408 C1077,403 1079,401 1082.7,399.8 C1095,404 1105,402 1111.5,401.1 C1117,390 1120,375 1125.9,359.2 Z" fill="url(#in2)"/>
<g clip-path="url(#inclip)">
 <ellipse cx="1100" cy="440" rx="25" ry="40" fill="#d2d2d2" filter="url(#blur6)"/>
 <ellipse cx="1190" cy="390" rx="45" ry="35" fill="#e4e4e4" filter="url(#blur6)"/>
 <ellipse cx="1280" cy="455" rx="60" ry="35" fill="#ffffff" filter="url(#blur6)"/>
 <ellipse cx="1390" cy="445" rx="18" ry="35" fill="#dcdcdc" filter="url(#blur6)"/>
</g>
<g clip-path="url(#silclip)"><path d="M1062,328L1077,328L1078,337Z" fill="#000" fill-opacity="0.01"/><path d="M1062,328L1078,337L1065,338Z" fill="#fff" fill-opacity="0.02"/><path d="M1065,338L1078,337L1071,349Z" fill="#fff" fill-opacity="0.04"/><path d="M1062,349L1071,349L1076,356Z" fill="#fff" fill-opacity="0.03"/><path d="M1059,358L1076,356L1071,367Z" fill="#fff" fill-opacity="0.04"/><path d="M1063,370L1071,367L1078,380Z" fill="#fff" fill-opacity="0.04"/><path d="M1063,370L1078,380L1059,377Z" fill="#fff" fill-opacity="0.02"/><path d="M1059,377L1078,380L1071,386Z" fill="#000" fill-opacity="0.01"/><path d="M1059,377L1071,386L1059,390Z" fill="#000" fill-opacity="0.02"/><path d="M1059,390L1071,386L1071,395Z" fill="#000" fill-opacity="0.03"/><path d="M1059,390L1071,395L1064,395Z" fill="#000" fill-opacity="0.02"/><path d="M1064,395L1071,395L1076,406Z" fill="#fff" fill-opacity="0.06"/><path d="M1064,395L1076,406L1066,411Z" fill="#000" fill-opacity="0.02"/><path d="M1066,411L1076,406L1074,418Z" fill="#000" fill-opacity="0.02"/><path d="M1066,411L1074,418L1063,419Z" fill="#000" fill-opacity="0.03"/><path d="M1063,419L1074,418L1072,430Z" fill="#000" fill-opacity="0.03"/><path d="M1063,419L1072,430L1059,425Z" fill="#fff" fill-opacity="0.03"/><path d="M1059,425L1072,430L1071,439Z" fill="#fff" fill-opacity="0.02"/><path d="M1059,425L1071,439L1062,435Z" fill="#fff" fill-opacity="0.04"/><path d="M1060,446L1071,447L1072,456Z" fill="#000" fill-opacity="0.03"/><path d="M1060,446L1072,456L1058,458Z" fill="#000" fill-opacity="0.02"/><path d="M1058,458L1072,456L1078,470Z" fill="#fff" fill-opacity="0.01"/><path d="M1062,470L1078,470L1072,481Z" fill="#fff" fill-opacity="0.02"/><path d="M1062,470L1072,481L1062,479Z" fill="#000" fill-opacity="0.01"/><path d="M1062,479L1072,481L1072,487Z" fill="#fff" fill-opacity="0.05"/><path d="M1062,479L1072,487L1062,489Z" fill="#fff" fill-opacity="0.03"/><path d="M1062,489L1072,487L1077,499Z" fill="#000" fill-opacity="0.03"/><path d="M1062,489L1077,499L1062,496Z" fill="#000" fill-opacity="0.01"/><path d="M1062,496L1077,499L1071,511Z" fill="#000" fill-opacity="0.03"/><path d="M1062,496L1071,511L1066,511Z" fill="#fff" fill-opacity="0.02"/><path d="M1066,511L1071,511L1072,516Z" fill="#fff" fill-opacity="0.06"/><path d="M1066,511L1072,516L1065,519Z" fill="#000" fill-opacity="0.02"/><path d="M1065,519L1072,516L1076,527Z" fill="#fff" fill-opacity="0.02"/><path d="M1065,519L1076,527L1061,526Z" fill="#fff" fill-opacity="0.02"/><path d="M1061,526L1076,527L1072,535Z" fill="#fff" fill-opacity="0.04"/><path d="M1061,526L1072,535L1060,535Z" fill="#fff" fill-opacity="0.06"/><path d="M1060,535L1072,535L1071,549Z" fill="#fff" fill-opacity="0.02"/><path d="M1060,535L1071,549L1064,547Z" fill="#fff" fill-opacity="0.04"/><path d="M1064,547L1071,549L1072,559Z" fill="#fff" fill-opacity="0.06"/><path d="M1064,547L1072,559L1065,557Z" fill="#000" fill-opacity="0.02"/><path d="M1065,557L1072,559L1073,568Z" fill="#000" fill-opacity="0.02"/><path d="M1065,557L1073,568L1066,570Z" fill="#000" fill-opacity="0.03"/><path d="M1066,570L1073,568L1078,578Z" fill="#000" fill-opacity="0.01"/><path d="M1066,570L1078,578L1058,576Z" fill="#000" fill-opacity="0.01"/><path d="M1077,328L1083,336L1078,337Z" fill="#000" fill-opacity="0.02"/><path d="M1078,337L1083,336L1089,350Z" fill="#fff" fill-opacity="0.04"/><path d="M1078,337L1089,350L1071,349Z" fill="#000" fill-opacity="0.03"/><path d="M1071,349L1089,350L1084,356Z" fill="#fff" fill-opacity="0.05"/><path d="M1071,349L1084,356L1076,356Z" fill="#000" fill-opacity="0.02"/><path d="M1076,356L1084,356L1088,371Z" fill="#000" fill-opacity="0.03"/><path d="M1076,356L1088,371L1071,367Z" fill="#fff" fill-opacity="0.05"/><path d="M1071,367L1088,371L1084,381Z" fill="#000" fill-opacity="0.01"/><path d="M1071,367L1084,381L1078,380Z" fill="#fff" fill-opacity="0.03"/><path d="M1078,380L1084,381L1089,389Z" fill="#000" fill-opacity="0.03"/><path d="M1078,380L1089,389L1071,386Z" fill="#000" fill-opacity="0.02"/><path d="M1071,386L1089,389L1085,395Z" fill="#000" fill-opacity="0.02"/><path d="M1071,395L1085,395L1082,411Z" fill="#fff" fill-opacity="0.02"/><path d="M1071,395L1082,411L1076,406Z" fill="#fff" fill-opacity="0.01"/><path d="M1076,406L1084,419L1074,418Z" fill="#000" fill-opacity="0.02"/><path d="M1074,418L1084,419L1084,430Z" fill="#fff" fill-opacity="0.03"/><path d="M1072,430L1087,437L1071,439Z" fill="#fff" fill-opacity="0.03"/><path d="M1071,439L1087,437L1083,450Z" fill="#000" fill-opacity="0.02"/><path d="M1071,439L1083,450L1071,447Z" fill="#fff" fill-opacity="0.06"/><path d="M1071,447L1083,456L1072,456Z" fill="#000" fill-opacity="0.03"/><path d="M1072,456L1083,456L1086,470Z" fill="#fff" fill-opacity="0.04"/><path d="M1072,456L1086,470L1078,470Z" fill="#000" fill-opacity="0.02"/><path d="M1078,470L1087,476L1072,481Z" fill="#000" fill-opacity="0.03"/><path d="M1072,481L1087,476L1089,486Z" fill="#fff" fill-opacity="0.05"/><path d="M1072,481L1089,486L1072,487Z" fill="#000" fill-opacity="0.01"/><path d="M1072,487L1082,496L1077,499Z" fill="#000" fill-opacity="0.03"/><path d="M1077,499L1082,496L1086,505Z" fill="#000" fill-opacity="0.02"/><path d="M1077,499L1086,505L1071,511Z" fill="#fff" fill-opacity="0.05"/><path d="M1071,511L1086,505L1083,517Z" fill="#fff" fill-opacity="0.03"/><path d="M1071,511L1083,517L1072,516Z" fill="#fff" fill-opacity="0.05"/><path d="M1072,516L1083,517L1087,525Z" fill="#000" fill-opacity="0.01"/><path d="M1072,516L1087,525L1076,527Z" fill="#fff" fill-opacity="0.02"/><path d="M1076,527L1087,525L1085,541Z" fill="#000" fill-opacity="0.02"/><path d="M1076,527L1085,541L1072,535Z" fill="#fff" fill-opacity="0.02"/><path d="M1072,535L1085,541L1090,549Z" fill="#000" fill-opacity="0.02"/><path d="M1072,535L1090,549L1071,549Z" fill="#000" fill-opacity="0.03"/><path d="M1071,549L1090,549L1088,559Z" fill="#000" fill-opacity="0.02"/><path d="M1071,549L1088,559L1072,559Z" fill="#fff" fill-opacity="0.02"/><path d="M1072,559L1083,565L1073,568Z" fill="#000" fill-opacity="0.01"/><path d="M1073,568L1083,565L1082,581Z" fill="#fff" fill-opacity="0.01"/><path d="M1073,568L1082,581L1078,578Z" fill="#fff" fill-opacity="0.03"/><path d="M1087,331L1100,331L1094,339Z" fill="#000" fill-opacity="0.01"/><path d="M1083,336L1094,339L1098,350Z" fill="#fff" fill-opacity="0.06"/><path d="M1083,336L1098,350L1089,350Z" fill="#000" fill-opacity="0.02"/><path d="M1089,350L1098,350L1097,361Z" fill="#000" fill-opacity="0.01"/><path d="M1089,350L1097,361L1084,356Z" fill="#fff" fill-opacity="0.04"/><path d="M1084,356L1097,361L1095,368Z" fill="#000" fill-opacity="0.02"/><path d="M1084,356L1095,368L1088,371Z" fill="#fff" fill-opacity="0.05"/><path d="M1084,381L1100,381L1100,389Z" fill="#fff" fill-opacity="0.03"/><path d="M1084,381L1100,389L1089,389Z" fill="#fff" fill-opacity="0.02"/><path d="M1089,389L1100,389L1100,401Z" fill="#000" fill-opacity="0.02"/><path d="M1089,389L1100,401L1085,395Z" fill="#000" fill-opacity="0.03"/><path d="M1085,395L1100,401L1097,409Z" fill="#fff" fill-opacity="0.02"/><path d="M1085,395L1097,409L1082,411Z" fill="#000" fill-opacity="0.03"/><path d="M1082,411L1097,409L1101,421Z" fill="#fff" fill-opacity="0.04"/><path d="M1082,411L1101,421L1084,419Z" fill="#000" fill-opacity="0.03"/><path d="M1084,419L1101,421L1097,430Z" fill="#000" fill-opacity="0.02"/><path d="M1084,419L1097,430L1084,430Z" fill="#fff" fill-opacity="0.06"/><path d="M1084,430L1101,439L1087,437Z" fill="#fff" fill-opacity="0.05"/><path d="M1087,437L1099,447L1083,450Z" fill="#fff" fill-opacity="0.03"/><path d="M1083,450L1099,447L1099,459Z" fill="#fff" fill-opacity="0.06"/><path d="M1083,456L1099,459L1095,469Z" fill="#fff" fill-opacity="0.03"/><path d="M1083,456L1095,469L1086,470Z" fill="#fff" fill-opacity="0.02"/><path d="M1086,470L1095,469L1102,481Z" fill="#000" fill-opacity="0.02"/><path d="M1086,470L1102,481L1087,476Z" fill="#000" fill-opacity="0.01"/><path d="M1087,476L1100,487L1089,486Z" fill="#000" fill-opacity="0.03"/><path d="M1089,486L1100,487L1100,499Z" fill="#fff" fill-opacity="0.03"/><path d="M1082,496L1100,499L1098,510Z" fill="#000" fill-opacity="0.03"/><path d="M1082,496L1098,510L1086,505Z" fill="#fff" fill-opacity="0.06"/><path d="M1086,505L1098,510L1095,520Z" fill="#000" fill-opacity="0.01"/><path d="M1086,505L1095,520L1083,517Z" fill="#fff" fill-opacity="0.05"/><path d="M1083,517L1095,520L1094,529Z" fill="#000" fill-opacity="0.03"/><path d="M1087,525L1094,529L1098,536Z" fill="#000" fill-opacity="0.01"/><path d="M1087,525L1098,536L1085,541Z" fill="#fff" fill-opacity="0.06"/><path d="M1085,541L1098,536L1100,548Z" fill="#fff" fill-opacity="0.04"/><path d="M1085,541L1100,548L1090,549Z" fill="#000" fill-opacity="0.03"/><path d="M1090,549L1100,548L1099,561Z" fill="#000" fill-opacity="0.03"/><path d="M1090,549L1099,561L1088,559Z" fill="#000" fill-opacity="0.02"/><path d="M1088,559L1099,561L1096,565Z" fill="#000" fill-opacity="0.01"/><path d="M1088,559L1096,565L1083,565Z" fill="#000" fill-opacity="0.01"/><path d="M1083,565L1096,565L1096,579Z" fill="#fff" fill-opacity="0.03"/><path d="M1083,565L1096,579L1082,581Z" fill="#000" fill-opacity="0.02"/><path d="M1100,331L1108,326L1113,339Z" fill="#fff" fill-opacity="0.02"/><path d="M1100,331L1113,339L1094,339Z" fill="#fff" fill-opacity="0.03"/><path d="M1094,339L1113,339L1110,351Z" fill="#fff" fill-opacity="0.02"/><path d="M1094,339L1110,351L1098,350Z" fill="#fff" fill-opacity="0.01"/><path d="M1098,350L1110,351L1109,359Z" fill="#000" fill-opacity="0.03"/><path d="M1098,350L1109,359L1097,361Z" fill="#fff" fill-opacity="0.02"/><path d="M1097,361L1109,359L1108,368Z" fill="#000" fill-opacity="0.03"/><path d="M1097,361L1108,368L1095,368Z" fill="#000" fill-opacity="0.03"/><path d="M1095,368L1108,368L1112,381Z" fill="#000" fill-opacity="0.02"/><path d="M1095,368L1112,381L1100,381Z" fill="#fff" fill-opacity="0.06"/><path d="M1100,381L1112,381L1113,387Z" fill="#fff" fill-opacity="0.03"/><path d="M1100,381L1113,387L1100,389Z" fill="#fff" fill-opacity="0.01"/><path d="M1100,389L1111,397L1100,401Z" fill="#000" fill-opacity="0.03"/><path d="M1100,401L1111,397L1107,408Z" fill="#000" fill-opacity="0.02"/><path d="M1100,401L1107,408L1097,409Z" fill="#fff" fill-opacity="0.03"/><path d="M1097,409L1113,420L1101,421Z" fill="#fff" fill-opacity="0.05"/><path d="M1101,421L1112,431L1097,430Z" fill="#fff" fill-opacity="0.01"/><path d="M1097,430L1112,431L1108,436Z" fill="#000" fill-opacity="0.02"/><path d="M1101,439L1108,436L1110,446Z" fill="#fff" fill-opacity="0.03"/><path d="M1101,439L1110,446L1099,447Z" fill="#fff" fill-opacity="0.06"/><path d="M1099,447L1110,446L1108,457Z" fill="#fff" fill-opacity="0.02"/><path d="M1099,447L1108,457L1099,459Z" fill="#fff" fill-opacity="0.04"/><path d="M1099,459L1108,457L1111,468Z" fill="#000" fill-opacity="0.03"/><path d="M1099,459L1111,468L1095,469Z" fill="#fff" fill-opacity="0.02"/><path d="M1095,469L1109,480L1102,481Z" fill="#fff" fill-opacity="0.02"/><path d="M1102,481L1114,488L1100,487Z" fill="#000" fill-opacity="0.02"/><path d="M1100,487L1107,495L1100,499Z" fill="#000" fill-opacity="0.02"/><path d="M1100,499L1113,505L1098,510Z" fill="#fff" fill-opacity="0.05"/><path d="M1098,510L1113,505L1112,518Z" fill="#fff" fill-opacity="0.03"/><path d="M1098,510L1112,518L1095,520Z" fill="#fff" fill-opacity="0.03"/><path d="M1095,520L1112,518L1108,530Z" fill="#fff" fill-opacity="0.06"/><path d="M1095,520L1108,530L1094,529Z" fill="#fff" fill-opacity="0.02"/><path d="M1094,529L1108,530L1106,535Z" fill="#000" fill-opacity="0.03"/><path d="M1094,529L1106,535L1098,536Z" fill="#000" fill-opacity="0.03"/><path d="M1098,536L1106,535L1110,545Z" fill="#000" fill-opacity="0.02"/><path d="M1098,536L1110,545L1100,548Z" fill="#000" fill-opacity="0.03"/><path d="M1100,548L1110,545L1113,556Z" fill="#fff" fill-opacity="0.03"/><path d="M1100,548L1113,556L1099,561Z" fill="#fff" fill-opacity="0.02"/><path d="M1099,561L1113,556L1107,565Z" fill="#000" fill-opacity="0.03"/><path d="M1099,561L1107,565L1096,565Z" fill="#000" fill-opacity="0.03"/><path d="M1108,326L1124,341L1113,339Z" fill="#fff" fill-opacity="0.02"/><path d="M1110,351L1123,346L1122,356Z" fill="#000" fill-opacity="0.02"/><path d="M1110,351L1122,356L1109,359Z" fill="#fff" fill-opacity="0.04"/><path d="M1109,359L1122,356L1118,368Z" fill="#fff" fill-opacity="0.05"/><path d="M1108,368L1118,368L1124,376Z" fill="#fff" fill-opacity="0.01"/><path d="M1108,368L1124,376L1112,381Z" fill="#fff" fill-opacity="0.02"/><path d="M1112,381L1124,376L1120,387Z" fill="#fff" fill-opacity="0.01"/><path d="M1112,381L1120,387L1113,387Z" fill="#fff" fill-opacity="0.03"/><path d="M1113,387L1124,398L1111,397Z" fill="#fff" fill-opacity="0.03"/><path d="M1111,397L1124,398L1123,410Z" fill="#fff" fill-opacity="0.03"/><path d="M1111,397L1123,410L1107,408Z" fill="#000" fill-opacity="0.01"/><path d="M1107,408L1123,410L1121,420Z" fill="#000" fill-opacity="0.02"/><path d="M1107,408L1121,420L1113,420Z" fill="#fff" fill-opacity="0.06"/><path d="M1113,420L1121,420L1125,425Z" fill="#fff" fill-opacity="0.06"/><path d="M1113,420L1125,425L1112,431Z" fill="#fff" fill-opacity="0.06"/><path d="M1112,431L1125,425L1125,440Z" fill="#000" fill-opacity="0.02"/><path d="M1112,431L1125,440L1108,436Z" fill="#fff" fill-opacity="0.04"/><path d="M1108,436L1125,440L1119,448Z" fill="#fff" fill-opacity="0.04"/><path d="M1110,446L1119,448L1123,461Z" fill="#fff" fill-opacity="0.06"/><path d="M1108,457L1123,461L1121,468Z" fill="#fff" fill-opacity="0.06"/><path d="M1111,468L1121,468L1125,480Z" fill="#fff" fill-opacity="0.04"/><path d="M1111,468L1125,480L1109,480Z" fill="#fff" fill-opacity="0.03"/><path d="M1109,480L1125,480L1126,488Z" fill="#fff" fill-opacity="0.05"/><path d="M1114,488L1126,488L1123,496Z" fill="#fff" fill-opacity="0.06"/><path d="M1114,488L1123,496L1107,495Z" fill="#fff" fill-opacity="0.02"/><path d="M1107,495L1123,496L1124,510Z" fill="#000" fill-opacity="0.01"/><path d="M1107,495L1124,510L1113,505Z" fill="#000" fill-opacity="0.03"/><path d="M1113,505L1124,510L1123,520Z" fill="#000" fill-opacity="0.02"/><path d="M1113,505L1123,520L1112,518Z" fill="#fff" fill-opacity="0.02"/><path d="M1112,518L1123,520L1120,531Z" fill="#fff" fill-opacity="0.03"/><path d="M1112,518L1120,531L1108,530Z" fill="#000" fill-opacity="0.03"/><path d="M1108,530L1126,541L1106,535Z" fill="#000" fill-opacity="0.02"/><path d="M1106,535L1126,541L1122,550Z" fill="#fff" fill-opacity="0.02"/><path d="M1106,535L1122,550L1110,545Z" fill="#000" fill-opacity="0.02"/><path d="M1110,545L1122,550L1121,561Z" fill="#000" fill-opacity="0.02"/><path d="M1110,545L1121,561L1113,556Z" fill="#000" fill-opacity="0.03"/><path d="M1113,556L1125,567L1107,565Z" fill="#000" fill-opacity="0.01"/><path d="M1107,565L1125,567L1119,578Z" fill="#fff" fill-opacity="0.04"/><path d="M1107,565L1119,578L1111,578Z" fill="#fff" fill-opacity="0.03"/><path d="M1123,329L1134,330L1134,335Z" fill="#000" fill-opacity="0.03"/><path d="M1124,341L1134,335L1136,345Z" fill="#000" fill-opacity="0.03"/><path d="M1124,341L1136,345L1123,346Z" fill="#000" fill-opacity="0.01"/><path d="M1123,346L1136,345L1136,356Z" fill="#fff" fill-opacity="0.06"/><path d="M1122,356L1136,356L1133,370Z" fill="#fff" fill-opacity="0.05"/><path d="M1122,356L1133,370L1118,368Z" fill="#000" fill-opacity="0.03"/><path d="M1118,368L1133,370L1131,376Z" fill="#000" fill-opacity="0.01"/><path d="M1118,368L1131,376L1124,376Z" fill="#fff" fill-opacity="0.04"/><path d="M1124,376L1131,376L1134,390Z" fill="#fff" fill-opacity="0.05"/><path d="M1124,376L1134,390L1120,387Z" fill="#000" fill-opacity="0.02"/><path d="M1124,398L1137,399L1138,408Z" fill="#000" fill-opacity="0.03"/><path d="M1124,398L1138,408L1123,410Z" fill="#fff" fill-opacity="0.06"/><path d="M1123,410L1138,408L1138,415Z" fill="#000" fill-opacity="0.03"/><path d="M1123,410L1138,415L1121,420Z" fill="#000" fill-opacity="0.03"/><path d="M1121,420L1138,415L1132,428Z" fill="#fff" fill-opacity="0.01"/><path d="M1121,420L1132,428L1125,425Z" fill="#000" fill-opacity="0.02"/><path d="M1125,425L1132,428L1132,440Z" fill="#fff" fill-opacity="0.04"/><path d="M1125,425L1132,440L1125,440Z" fill="#fff" fill-opacity="0.03"/><path d="M1125,440L1135,448L1119,448Z" fill="#000" fill-opacity="0.03"/><path d="M1123,461L1132,467L1121,468Z" fill="#000" fill-opacity="0.02"/><path d="M1121,468L1132,467L1137,481Z" fill="#fff" fill-opacity="0.03"/><path d="M1121,468L1137,481L1125,480Z" fill="#fff" fill-opacity="0.03"/><path d="M1126,488L1132,490L1138,498Z" fill="#000" fill-opacity="0.03"/><path d="M1126,488L1138,498L1123,496Z" fill="#fff" fill-opacity="0.03"/><path d="M1123,496L1138,498L1135,506Z" fill="#000" fill-opacity="0.01"/><path d="M1123,496L1135,506L1124,510Z" fill="#fff" fill-opacity="0.02"/><path d="M1124,510L1135,506L1134,518Z" fill="#fff" fill-opacity="0.06"/><path d="M1124,510L1134,518L1123,520Z" fill="#fff" fill-opacity="0.04"/><path d="M1123,520L1134,518L1135,525Z" fill="#fff" fill-opacity="0.03"/><path d="M1123,520L1135,525L1120,531Z" fill="#000" fill-opacity="0.03"/><path d="M1120,531L1138,538L1126,541Z" fill="#fff" fill-opacity="0.02"/><path d="M1126,541L1133,550L1122,550Z" fill="#000" fill-opacity="0.03"/><path d="M1122,550L1135,558L1121,561Z" fill="#000" fill-opacity="0.03"/><path d="M1121,561L1135,558L1136,565Z" fill="#fff" fill-opacity="0.04"/><path d="M1121,561L1136,565L1125,567Z" fill="#fff" fill-opacity="0.01"/><path d="M1125,567L1136,565L1134,577Z" fill="#000" fill-opacity="0.01"/><path d="M1134,330L1150,331L1144,338Z" fill="#fff" fill-opacity="0.02"/><path d="M1134,330L1144,338L1134,335Z" fill="#fff" fill-opacity="0.04"/><path d="M1134,335L1144,338L1143,348Z" fill="#000" fill-opacity="0.01"/><path d="M1134,335L1143,348L1136,345Z" fill="#fff" fill-opacity="0.03"/><path d="M1136,345L1143,348L1149,361Z" fill="#000" fill-opacity="0.02"/><path d="M1136,345L1149,361L1136,356Z" fill="#fff" fill-opacity="0.02"/><path d="M1136,356L1149,361L1146,367Z" fill="#fff" fill-opacity="0.01"/><path d="M1136,356L1146,367L1133,370Z" fill="#fff" fill-opacity="0.05"/><path d="M1133,370L1144,379L1131,376Z" fill="#fff" fill-opacity="0.06"/><path d="M1131,376L1149,385L1134,390Z" fill="#fff" fill-opacity="0.01"/><path d="M1134,390L1148,395L1137,399Z" fill="#fff" fill-opacity="0.02"/><path d="M1137,399L1148,395L1144,406Z" fill="#000" fill-opacity="0.02"/><path d="M1137,399L1144,406L1138,408Z" fill="#000" fill-opacity="0.02"/><path d="M1138,408L1144,406L1147,417Z" fill="#fff" fill-opacity="0.06"/><path d="M1138,408L1147,417L1138,415Z" fill="#fff" fill-opacity="0.02"/><path d="M1138,415L1147,417L1145,429Z" fill="#000" fill-opacity="0.02"/><path d="M1138,415L1145,429L1132,428Z" fill="#000" fill-opacity="0.02"/><path d="M1132,428L1145,429L1143,440Z" fill="#fff" fill-opacity="0.03"/><path d="M1132,428L1143,440L1132,440Z" fill="#000" fill-opacity="0.02"/><path d="M1132,440L1143,440L1143,448Z" fill="#fff" fill-opacity="0.04"/><path d="M1132,440L1143,448L1135,448Z" fill="#fff" fill-opacity="0.02"/><path d="M1135,448L1144,456L1137,458Z" fill="#fff" fill-opacity="0.01"/><path d="M1137,458L1144,456L1146,468Z" fill="#fff" fill-opacity="0.05"/><path d="M1137,458L1146,468L1132,467Z" fill="#000" fill-opacity="0.03"/><path d="M1132,467L1146,468L1145,477Z" fill="#fff" fill-opacity="0.03"/><path d="M1132,467L1145,477L1137,481Z" fill="#fff" fill-opacity="0.06"/><path d="M1137,481L1145,477L1146,486Z" fill="#fff" fill-opacity="0.03"/><path d="M1137,481L1146,486L1132,490Z" fill="#000" fill-opacity="0.03"/><path d="M1132,490L1146,486L1144,499Z" fill="#fff" fill-opacity="0.02"/><path d="M1138,498L1144,499L1147,508Z" fill="#fff" fill-opacity="0.05"/><path d="M1138,498L1147,508L1135,506Z" fill="#fff" fill-opacity="0.06"/><path d="M1135,506L1147,508L1149,519Z" fill="#fff" fill-opacity="0.05"/><path d="M1135,506L1149,519L1134,518Z" fill="#fff" fill-opacity="0.05"/><path d="M1134,518L1149,519L1149,526Z" fill="#fff" fill-opacity="0.01"/><path d="M1134,518L1149,526L1135,525Z" fill="#fff" fill-opacity="0.02"/><path d="M1135,525L1149,526L1148,540Z" fill="#000" fill-opacity="0.03"/><path d="M1135,525L1148,540L1138,538Z" fill="#000" fill-opacity="0.02"/><path d="M1138,538L1148,540L1149,547Z" fill="#000" fill-opacity="0.03"/><path d="M1138,538L1149,547L1133,550Z" fill="#fff" fill-opacity="0.05"/><path d="M1133,550L1149,547L1145,561Z" fill="#fff" fill-opacity="0.04"/><path d="M1133,550L1145,561L1135,558Z" fill="#000" fill-opacity="0.02"/><path d="M1135,558L1145,561L1144,571Z" fill="#000" fill-opacity="0.03"/><path d="M1135,558L1144,571L1136,565Z" fill="#fff" fill-opacity="0.02"/><path d="M1136,565L1144,571L1149,575Z" fill="#000" fill-opacity="0.02"/><path d="M1136,565L1149,575L1134,577Z" fill="#fff" fill-opacity="0.06"/><path d="M1144,338L1156,335L1161,347Z" fill="#fff" fill-opacity="0.05"/><path d="M1144,338L1161,347L1143,348Z" fill="#fff" fill-opacity="0.05"/><path d="M1143,348L1161,347L1160,355Z" fill="#fff" fill-opacity="0.06"/><path d="M1143,348L1160,355L1149,361Z" fill="#fff" fill-opacity="0.03"/><path d="M1149,361L1160,355L1157,369Z" fill="#000" fill-opacity="0.01"/><path d="M1146,367L1157,369L1154,376Z" fill="#fff" fill-opacity="0.01"/><path d="M1146,367L1154,376L1144,379Z" fill="#fff" fill-opacity="0.05"/><path d="M1144,379L1154,376L1159,391Z" fill="#fff" fill-opacity="0.03"/><path d="M1149,385L1159,391L1162,395Z" fill="#000" fill-opacity="0.02"/><path d="M1149,385L1162,395L1148,395Z" fill="#fff" fill-opacity="0.06"/><path d="M1148,395L1162,395L1158,410Z" fill="#000" fill-opacity="0.03"/><path d="M1148,395L1158,410L1144,406Z" fill="#fff" fill-opacity="0.02"/><path d="M1144,406L1158,410L1158,419Z" fill="#fff" fill-opacity="0.04"/><path d="M1144,406L1158,419L1147,417Z" fill="#fff" fill-opacity="0.05"/><path d="M1147,417L1156,425L1145,429Z" fill="#fff" fill-opacity="0.03"/><path d="M1145,429L1156,425L1155,435Z" fill="#000" fill-opacity="0.03"/><path d="M1145,429L1155,435L1143,440Z" fill="#fff" fill-opacity="0.03"/><path d="M1143,440L1155,435L1158,448Z" fill="#fff" fill-opacity="0.01"/><path d="M1143,440L1158,448L1143,448Z" fill="#000" fill-opacity="0.02"/><path d="M1143,448L1158,448L1159,456Z" fill="#000" fill-opacity="0.01"/><path d="M1144,456L1159,456L1155,466Z" fill="#000" fill-opacity="0.02"/><path d="M1144,456L1155,466L1146,468Z" fill="#fff" fill-opacity="0.04"/><path d="M1146,468L1155,466L1161,481Z" fill="#000" fill-opacity="0.01"/><path d="M1146,468L1161,481L1145,477Z" fill="#000" fill-opacity="0.02"/><path d="M1145,477L1161,485L1146,486Z" fill="#000" fill-opacity="0.02"/><path d="M1146,486L1161,485L1154,501Z" fill="#fff" fill-opacity="0.03"/><path d="M1146,486L1154,501L1144,499Z" fill="#fff" fill-opacity="0.06"/><path d="M1144,499L1154,501L1158,510Z" fill="#fff" fill-opacity="0.02"/><path d="M1144,499L1158,510L1147,508Z" fill="#fff" fill-opacity="0.06"/><path d="M1147,508L1158,510L1157,518Z" fill="#fff" fill-opacity="0.01"/><path d="M1149,519L1157,518L1158,528Z" fill="#000" fill-opacity="0.02"/><path d="M1149,519L1158,528L1149,526Z" fill="#000" fill-opacity="0.03"/><path d="M1149,526L1158,528L1159,535Z" fill="#fff" fill-opacity="0.02"/><path d="M1149,526L1159,535L1148,540Z" fill="#fff" fill-opacity="0.04"/><path d="M1148,540L1159,535L1160,550Z" fill="#fff" fill-opacity="0.03"/><path d="M1149,547L1160,550L1155,558Z" fill="#fff" fill-opacity="0.06"/><path d="M1145,561L1160,567L1144,571Z" fill="#fff" fill-opacity="0.03"/><path d="M1144,571L1160,567L1156,576Z" fill="#000" fill-opacity="0.01"/><path d="M1144,571L1156,576L1149,575Z" fill="#fff" fill-opacity="0.04"/><path d="M1156,330L1170,325L1173,340Z" fill="#000" fill-opacity="0.02"/><path d="M1156,330L1173,340L1156,335Z" fill="#fff" fill-opacity="0.04"/><path d="M1156,335L1173,340L1172,351Z" fill="#000" fill-opacity="0.02"/><path d="M1161,347L1171,357L1160,355Z" fill="#000" fill-opacity="0.01"/><path d="M1160,355L1171,368L1157,369Z" fill="#fff" fill-opacity="0.05"/><path d="M1157,369L1171,368L1174,380Z" fill="#fff" fill-opacity="0.04"/><path d="M1157,369L1174,380L1154,376Z" fill="#000" fill-opacity="0.03"/><path d="M1154,376L1174,380L1168,391Z" fill="#000" fill-opacity="0.01"/><path d="M1154,376L1168,391L1159,391Z" fill="#000" fill-opacity="0.03"/><path d="M1159,391L1168,391L1172,400Z" fill="#fff" fill-opacity="0.02"/><path d="M1159,391L1172,400L1162,395Z" fill="#000" fill-opacity="0.03"/><path d="M1162,395L1172,400L1173,407Z" fill="#000" fill-opacity="0.03"/><path d="M1162,395L1173,407L1158,410Z" fill="#fff" fill-opacity="0.03"/><path d="M1158,410L1173,407L1173,421Z" fill="#000" fill-opacity="0.02"/><path d="M1158,410L1173,421L1158,419Z" fill="#fff" fill-opacity="0.02"/><path d="M1158,419L1173,421L1172,430Z" fill="#fff" fill-opacity="0.02"/><path d="M1158,419L1172,430L1156,425Z" fill="#000" fill-opacity="0.03"/><path d="M1156,425L1172,430L1172,437Z" fill="#fff" fill-opacity="0.03"/><path d="M1156,425L1172,437L1155,435Z" fill="#fff" fill-opacity="0.03"/><path d="M1155,435L1172,437L1172,445Z" fill="#000" fill-opacity="0.03"/><path d="M1155,435L1172,445L1158,448Z" fill="#fff" fill-opacity="0.05"/><path d="M1158,448L1172,445L1169,458Z" fill="#000" fill-opacity="0.02"/><path d="M1158,448L1169,458L1159,456Z" fill="#fff" fill-opacity="0.02"/><path d="M1159,456L1169,458L1166,467Z" fill="#fff" fill-opacity="0.06"/><path d="M1159,456L1166,467L1155,466Z" fill="#fff" fill-opacity="0.04"/><path d="M1155,466L1166,467L1171,479Z" fill="#000" fill-opacity="0.02"/><path d="M1155,466L1171,479L1161,481Z" fill="#000" fill-opacity="0.03"/><path d="M1161,481L1171,479L1168,491Z" fill="#fff" fill-opacity="0.06"/><path d="M1161,481L1168,491L1161,485Z" fill="#000" fill-opacity="0.02"/><path d="M1161,485L1168,491L1171,497Z" fill="#000" fill-opacity="0.01"/><path d="M1161,485L1171,497L1154,501Z" fill="#fff" fill-opacity="0.02"/><path d="M1154,501L1171,497L1171,508Z" fill="#fff" fill-opacity="0.01"/><path d="M1154,501L1171,508L1158,510Z" fill="#000" fill-opacity="0.03"/><path d="M1158,510L1171,508L1170,517Z" fill="#000" fill-opacity="0.03"/><path d="M1158,510L1170,517L1157,518Z" fill="#000" fill-opacity="0.02"/><path d="M1157,518L1170,517L1174,529Z" fill="#fff" fill-opacity="0.05"/><path d="M1157,518L1174,529L1158,528Z" fill="#000" fill-opacity="0.02"/><path d="M1158,528L1174,529L1172,540Z" fill="#fff" fill-opacity="0.05"/><path d="M1158,528L1172,540L1159,535Z" fill="#fff" fill-opacity="0.03"/><path d="M1159,535L1172,540L1174,545Z" fill="#000" fill-opacity="0.02"/><path d="M1159,535L1174,545L1160,550Z" fill="#fff" fill-opacity="0.03"/><path d="M1160,550L1171,560L1155,558Z" fill="#fff" fill-opacity="0.02"/><path d="M1155,558L1171,560L1168,567Z" fill="#fff" fill-opacity="0.06"/><path d="M1155,558L1168,567L1160,567Z" fill="#000" fill-opacity="0.02"/><path d="M1160,567L1168,567L1166,576Z" fill="#fff" fill-opacity="0.03"/><path d="M1160,567L1166,576L1156,576Z" fill="#000" fill-opacity="0.02"/><path d="M1170,325L1181,325L1180,341Z" fill="#fff" fill-opacity="0.04"/><path d="M1170,325L1180,341L1173,340Z" fill="#000" fill-opacity="0.03"/><path d="M1173,340L1182,348L1172,351Z" fill="#fff" fill-opacity="0.03"/><path d="M1172,351L1182,348L1186,358Z" fill="#fff" fill-opacity="0.06"/><path d="M1172,351L1186,358L1171,357Z" fill="#fff" fill-opacity="0.06"/><path d="M1171,357L1186,358L1186,369Z" fill="#000" fill-opacity="0.03"/><path d="M1171,357L1186,369L1171,368Z" fill="#000" fill-opacity="0.01"/><path d="M1171,368L1186,369L1184,375Z" fill="#fff" fill-opacity="0.04"/><path d="M1171,368L1184,375L1174,380Z" fill="#fff" fill-opacity="0.02"/><path d="M1174,380L1184,375L1183,390Z" fill="#000" fill-opacity="0.01"/><path d="M1168,391L1183,390L1178,401Z" fill="#000" fill-opacity="0.02"/><path d="M1168,391L1178,401L1172,400Z" fill="#000" fill-opacity="0.01"/><path d="M1172,400L1178,401L1179,408Z" fill="#fff" fill-opacity="0.06"/><path d="M1173,407L1179,418L1173,421Z" fill="#fff" fill-opacity="0.04"/><path d="M1173,421L1179,418L1183,425Z" fill="#000" fill-opacity="0.02"/><path d="M1172,430L1183,425L1186,437Z" fill="#fff" fill-opacity="0.05"/><path d="M1172,430L1186,437L1172,437Z" fill="#000" fill-opacity="0.02"/><path d="M1172,437L1186,437L1182,449Z" fill="#fff" fill-opacity="0.02"/><path d="M1172,437L1182,449L1172,445Z" fill="#fff" fill-opacity="0.01"/><path d="M1172,445L1182,449L1181,457Z" fill="#fff" fill-opacity="0.02"/><path d="M1172,445L1181,457L1169,458Z" fill="#000" fill-opacity="0.03"/><path d="M1169,458L1181,457L1183,468Z" fill="#fff" fill-opacity="0.04"/><path d="M1169,458L1183,468L1166,467Z" fill="#fff" fill-opacity="0.01"/><path d="M1166,467L1183,468L1180,480Z" fill="#000" fill-opacity="0.02"/><path d="M1166,467L1180,480L1171,479Z" fill="#000" fill-opacity="0.03"/><path d="M1171,479L1180,480L1180,485Z" fill="#000" fill-opacity="0.02"/><path d="M1171,479L1180,485L1168,491Z" fill="#000" fill-opacity="0.03"/><path d="M1168,491L1180,485L1180,495Z" fill="#fff" fill-opacity="0.04"/><path d="M1168,491L1180,495L1171,497Z" fill="#000" fill-opacity="0.01"/><path d="M1171,497L1180,495L1179,510Z" fill="#fff" fill-opacity="0.01"/><path d="M1171,497L1179,510L1171,508Z" fill="#fff" fill-opacity="0.05"/><path d="M1171,508L1179,510L1181,521Z" fill="#000" fill-opacity="0.01"/><path d="M1171,508L1181,521L1170,517Z" fill="#000" fill-opacity="0.03"/><path d="M1170,517L1181,521L1184,525Z" fill="#000" fill-opacity="0.02"/><path d="M1170,517L1184,525L1174,529Z" fill="#000" fill-opacity="0.03"/><path d="M1174,529L1184,525L1186,541Z" fill="#fff" fill-opacity="0.03"/><path d="M1172,540L1186,541L1179,551Z" fill="#000" fill-opacity="0.03"/><path d="M1172,540L1179,551L1174,545Z" fill="#fff" fill-opacity="0.05"/><path d="M1174,545L1181,558L1171,560Z" fill="#000" fill-opacity="0.02"/><path d="M1171,560L1186,566L1168,567Z" fill="#fff" fill-opacity="0.04"/><path d="M1168,567L1186,566L1182,581Z" fill="#000" fill-opacity="0.02"/><path d="M1168,567L1182,581L1166,576Z" fill="#000" fill-opacity="0.02"/><path d="M1181,325L1196,328L1198,340Z" fill="#000" fill-opacity="0.01"/><path d="M1181,325L1198,340L1180,341Z" fill="#000" fill-opacity="0.01"/><path d="M1180,341L1195,345L1182,348Z" fill="#000" fill-opacity="0.02"/><path d="M1182,348L1195,358L1186,358Z" fill="#fff" fill-opacity="0.03"/><path d="M1186,358L1195,358L1192,365Z" fill="#fff" fill-opacity="0.02"/><path d="M1186,358L1192,365L1186,369Z" fill="#fff" fill-opacity="0.05"/><path d="M1186,369L1192,365L1194,375Z" fill="#fff" fill-opacity="0.04"/><path d="M1186,369L1194,375L1184,375Z" fill="#fff" fill-opacity="0.03"/><path d="M1184,375L1194,375L1194,389Z" fill="#000" fill-opacity="0.01"/><path d="M1184,375L1194,389L1183,390Z" fill="#fff" fill-opacity="0.03"/><path d="M1183,390L1194,389L1194,396Z" fill="#fff" fill-opacity="0.03"/><path d="M1183,390L1194,396L1178,401Z" fill="#fff" fill-opacity="0.05"/><path d="M1179,408L1195,407L1196,418Z" fill="#fff" fill-opacity="0.04"/><path d="M1179,418L1196,418L1198,431Z" fill="#fff" fill-opacity="0.05"/><path d="M1179,418L1198,431L1183,425Z" fill="#fff" fill-opacity="0.04"/><path d="M1183,425L1198,431L1196,436Z" fill="#fff" fill-opacity="0.03"/><path d="M1183,425L1196,436L1186,437Z" fill="#000" fill-opacity="0.02"/><path d="M1186,437L1196,436L1191,451Z" fill="#fff" fill-opacity="0.06"/><path d="M1186,437L1191,451L1182,449Z" fill="#fff" fill-opacity="0.05"/><path d="M1182,449L1196,459L1181,457Z" fill="#fff" fill-opacity="0.03"/><path d="M1181,457L1196,459L1193,466Z" fill="#fff" fill-opacity="0.02"/><path d="M1181,457L1193,466L1183,468Z" fill="#fff" fill-opacity="0.03"/><path d="M1180,480L1195,478L1195,489Z" fill="#000" fill-opacity="0.01"/><path d="M1180,485L1195,489L1196,496Z" fill="#fff" fill-opacity="0.06"/><path d="M1180,485L1196,496L1180,495Z" fill="#000" fill-opacity="0.03"/><path d="M1180,495L1196,496L1192,511Z" fill="#fff" fill-opacity="0.03"/><path d="M1180,495L1192,511L1179,510Z" fill="#000" fill-opacity="0.02"/><path d="M1179,510L1192,511L1197,521Z" fill="#fff" fill-opacity="0.04"/><path d="M1179,510L1197,521L1181,521Z" fill="#000" fill-opacity="0.02"/><path d="M1181,521L1197,521L1190,525Z" fill="#fff" fill-opacity="0.02"/><path d="M1181,521L1190,525L1184,525Z" fill="#fff" fill-opacity="0.04"/><path d="M1184,525L1192,537L1186,541Z" fill="#fff" fill-opacity="0.01"/><path d="M1186,541L1192,537L1195,545Z" fill="#000" fill-opacity="0.03"/><path d="M1186,541L1195,545L1179,551Z" fill="#000" fill-opacity="0.03"/><path d="M1179,551L1194,555L1181,558Z" fill="#fff" fill-opacity="0.02"/><path d="M1181,558L1194,555L1191,569Z" fill="#fff" fill-opacity="0.04"/><path d="M1186,566L1191,569L1194,579Z" fill="#000" fill-opacity="0.03"/><path d="M1196,328L1204,337L1198,340Z" fill="#fff" fill-opacity="0.06"/><path d="M1198,340L1208,350L1195,345Z" fill="#fff" fill-opacity="0.01"/><path d="M1195,345L1208,350L1203,355Z" fill="#fff" fill-opacity="0.04"/><path d="M1195,358L1203,355L1208,369Z" fill="#fff" fill-opacity="0.02"/><path d="M1195,358L1208,369L1192,365Z" fill="#fff" fill-opacity="0.02"/><path d="M1192,365L1208,369L1208,376Z" fill="#fff" fill-opacity="0.01"/><path d="M1192,365L1208,376L1194,375Z" fill="#fff" fill-opacity="0.06"/><path d="M1194,375L1205,386L1194,389Z" fill="#fff" fill-opacity="0.04"/><path d="M1194,389L1208,397L1194,396Z" fill="#000" fill-opacity="0.01"/><path d="M1194,396L1208,397L1207,411Z" fill="#fff" fill-opacity="0.04"/><path d="M1194,396L1207,411L1195,407Z" fill="#fff" fill-opacity="0.04"/><path d="M1195,407L1207,411L1205,418Z" fill="#fff" fill-opacity="0.02"/><path d="M1195,407L1205,418L1196,418Z" fill="#fff" fill-opacity="0.03"/><path d="M1196,418L1205,418L1208,431Z" fill="#000" fill-opacity="0.02"/><path d="M1196,418L1208,431L1198,431Z" fill="#000" fill-opacity="0.02"/><path d="M1198,431L1205,437L1196,436Z" fill="#fff" fill-opacity="0.02"/><path d="M1196,436L1203,451L1191,451Z" fill="#fff" fill-opacity="0.05"/><path d="M1191,451L1203,451L1203,455Z" fill="#000" fill-opacity="0.02"/><path d="M1191,451L1203,455L1196,459Z" fill="#fff" fill-opacity="0.05"/><path d="M1196,459L1203,455L1207,468Z" fill="#fff" fill-opacity="0.01"/><path d="M1196,459L1207,468L1193,466Z" fill="#000" fill-opacity="0.03"/><path d="M1193,466L1207,468L1207,477Z" fill="#000" fill-opacity="0.03"/><path d="M1195,478L1207,477L1208,485Z" fill="#fff" fill-opacity="0.05"/><path d="M1195,478L1208,485L1195,489Z" fill="#fff" fill-opacity="0.04"/><path d="M1195,489L1208,485L1204,499Z" fill="#fff" fill-opacity="0.04"/><path d="M1195,489L1204,499L1196,496Z" fill="#000" fill-opacity="0.03"/><path d="M1192,511L1203,507L1208,519Z" fill="#fff" fill-opacity="0.02"/><path d="M1197,521L1208,519L1204,526Z" fill="#fff" fill-opacity="0.04"/><path d="M1190,525L1204,526L1205,540Z" fill="#000" fill-opacity="0.01"/><path d="M1192,537L1205,540L1205,545Z" fill="#000" fill-opacity="0.02"/><path d="M1195,545L1205,545L1208,558Z" fill="#fff" fill-opacity="0.02"/><path d="M1195,545L1208,558L1194,555Z" fill="#000" fill-opacity="0.02"/><path d="M1194,555L1208,558L1209,571Z" fill="#fff" fill-opacity="0.02"/><path d="M1191,569L1209,571L1209,578Z" fill="#fff" fill-opacity="0.01"/><path d="M1205,328L1220,327L1217,337Z" fill="#fff" fill-opacity="0.04"/><path d="M1205,328L1217,337L1204,337Z" fill="#000" fill-opacity="0.02"/><path d="M1204,337L1221,351L1208,350Z" fill="#000" fill-opacity="0.02"/><path d="M1208,350L1221,351L1216,357Z" fill="#000" fill-opacity="0.02"/><path d="M1203,355L1216,357L1217,367Z" fill="#000" fill-opacity="0.01"/><path d="M1203,355L1217,367L1208,369Z" fill="#fff" fill-opacity="0.05"/><path d="M1208,369L1217,367L1217,377Z" fill="#fff" fill-opacity="0.06"/><path d="M1208,369L1217,377L1208,376Z" fill="#000" fill-opacity="0.01"/><path d="M1208,376L1217,377L1216,388Z" fill="#fff" fill-opacity="0.05"/><path d="M1208,376L1216,388L1205,386Z" fill="#000" fill-opacity="0.03"/><path d="M1205,386L1216,388L1220,398Z" fill="#fff" fill-opacity="0.05"/><path d="M1205,386L1220,398L1208,397Z" fill="#000" fill-opacity="0.02"/><path d="M1208,397L1220,398L1221,408Z" fill="#fff" fill-opacity="0.05"/><path d="M1208,397L1221,408L1207,411Z" fill="#fff" fill-opacity="0.05"/><path d="M1207,411L1221,408L1215,420Z" fill="#fff" fill-opacity="0.05"/><path d="M1207,411L1215,420L1205,418Z" fill="#fff" fill-opacity="0.06"/><path d="M1205,418L1215,420L1221,426Z" fill="#000" fill-opacity="0.01"/><path d="M1208,431L1214,438L1205,437Z" fill="#fff" fill-opacity="0.02"/><path d="M1205,437L1214,438L1218,448Z" fill="#000" fill-opacity="0.02"/><path d="M1205,437L1218,448L1203,451Z" fill="#000" fill-opacity="0.02"/><path d="M1203,451L1218,448L1222,459Z" fill="#fff" fill-opacity="0.06"/><path d="M1203,451L1222,459L1203,455Z" fill="#000" fill-opacity="0.01"/><path d="M1203,455L1222,459L1220,465Z" fill="#fff" fill-opacity="0.01"/><path d="M1203,455L1220,465L1207,468Z" fill="#fff" fill-opacity="0.01"/><path d="M1207,468L1220,465L1218,480Z" fill="#fff" fill-opacity="0.02"/><path d="M1207,477L1218,480L1215,485Z" fill="#000" fill-opacity="0.01"/><path d="M1207,477L1215,485L1208,485Z" fill="#000" fill-opacity="0.03"/><path d="M1208,485L1220,501L1204,499Z" fill="#fff" fill-opacity="0.01"/><path d="M1204,499L1220,501L1215,509Z" fill="#fff" fill-opacity="0.04"/><path d="M1204,499L1215,509L1203,507Z" fill="#fff" fill-opacity="0.06"/><path d="M1203,507L1215,509L1215,520Z" fill="#000" fill-opacity="0.01"/><path d="M1203,507L1215,520L1208,519Z" fill="#000" fill-opacity="0.01"/><path d="M1208,519L1215,520L1219,526Z" fill="#fff" fill-opacity="0.03"/><path d="M1204,526L1219,526L1216,540Z" fill="#fff" fill-opacity="0.06"/><path d="M1204,526L1216,540L1205,540Z" fill="#000" fill-opacity="0.02"/><path d="M1205,545L1218,550L1217,557Z" fill="#fff" fill-opacity="0.03"/><path d="M1205,545L1217,557L1208,558Z" fill="#fff" fill-opacity="0.06"/><path d="M1208,558L1222,569L1209,571Z" fill="#000" fill-opacity="0.02"/><path d="M1209,571L1222,569L1218,578Z" fill="#fff" fill-opacity="0.04"/><path d="M1209,571L1218,578L1209,578Z" fill="#fff" fill-opacity="0.05"/><path d="M1221,351L1233,360L1216,357Z" fill="#fff" fill-opacity="0.05"/><path d="M1216,357L1233,371L1217,367Z" fill="#fff" fill-opacity="0.04"/><path d="M1217,367L1233,371L1234,379Z" fill="#fff" fill-opacity="0.03"/><path d="M1217,367L1234,379L1217,377Z" fill="#fff" fill-opacity="0.05"/><path d="M1217,377L1234,379L1230,389Z" fill="#fff" fill-opacity="0.06"/><path d="M1217,377L1230,389L1216,388Z" fill="#000" fill-opacity="0.03"/><path d="M1216,388L1230,389L1232,397Z" fill="#fff" fill-opacity="0.03"/><path d="M1216,388L1232,397L1220,398Z" fill="#000" fill-opacity="0.02"/><path d="M1220,398L1232,397L1229,406Z" fill="#000" fill-opacity="0.02"/><path d="M1220,398L1229,406L1221,408Z" fill="#fff" fill-opacity="0.03"/><path d="M1221,408L1232,421L1215,420Z" fill="#fff" fill-opacity="0.04"/><path d="M1215,420L1232,421L1229,426Z" fill="#fff" fill-opacity="0.05"/><path d="M1215,420L1229,426L1221,426Z" fill="#000" fill-opacity="0.02"/><path d="M1221,426L1229,426L1228,437Z" fill="#fff" fill-opacity="0.05"/><path d="M1221,426L1228,437L1214,438Z" fill="#000" fill-opacity="0.03"/><path d="M1214,438L1228,437L1228,451Z" fill="#fff" fill-opacity="0.02"/><path d="M1214,438L1228,451L1218,448Z" fill="#fff" fill-opacity="0.02"/><path d="M1222,459L1227,469L1220,465Z" fill="#000" fill-opacity="0.01"/><path d="M1220,465L1227,469L1232,476Z" fill="#fff" fill-opacity="0.05"/><path d="M1220,465L1232,476L1218,480Z" fill="#000" fill-opacity="0.01"/><path d="M1218,480L1232,476L1226,488Z" fill="#000" fill-opacity="0.03"/><path d="M1215,485L1226,488L1231,501Z" fill="#fff" fill-opacity="0.03"/><path d="M1220,501L1231,501L1226,505Z" fill="#fff" fill-opacity="0.04"/><path d="M1220,501L1226,505L1215,509Z" fill="#000" fill-opacity="0.02"/><path d="M1215,509L1226,505L1227,516Z" fill="#000" fill-opacity="0.02"/><path d="M1215,520L1227,516L1228,530Z" fill="#fff" fill-opacity="0.02"/><path d="M1215,520L1228,530L1219,526Z" fill="#000" fill-opacity="0.03"/><path d="M1219,526L1231,536L1216,540Z" fill="#fff" fill-opacity="0.03"/><path d="M1216,540L1231,536L1227,546Z" fill="#fff" fill-opacity="0.05"/><path d="M1218,550L1227,546L1227,560Z" fill="#fff" fill-opacity="0.03"/><path d="M1218,550L1227,560L1217,557Z" fill="#000" fill-opacity="0.03"/><path d="M1217,557L1227,560L1228,568Z" fill="#000" fill-opacity="0.02"/><path d="M1217,557L1228,568L1222,569Z" fill="#000" fill-opacity="0.03"/><path d="M1222,569L1228,568L1233,578Z" fill="#fff" fill-opacity="0.04"/><path d="M1222,569L1233,578L1218,578Z" fill="#000" fill-opacity="0.03"/><path d="M1232,329L1240,331L1245,337Z" fill="#fff" fill-opacity="0.05"/><path d="M1232,329L1245,337L1233,337Z" fill="#000" fill-opacity="0.02"/><path d="M1233,337L1245,337L1242,351Z" fill="#000" fill-opacity="0.02"/><path d="M1233,337L1242,351L1233,349Z" fill="#fff" fill-opacity="0.05"/><path d="M1233,349L1242,351L1242,356Z" fill="#000" fill-opacity="0.02"/><path d="M1233,360L1242,356L1238,371Z" fill="#fff" fill-opacity="0.05"/><path d="M1233,360L1238,371L1233,371Z" fill="#000" fill-opacity="0.01"/><path d="M1233,371L1238,371L1244,377Z" fill="#fff" fill-opacity="0.04"/><path d="M1234,379L1242,388L1230,389Z" fill="#fff" fill-opacity="0.03"/><path d="M1230,389L1242,388L1240,401Z" fill="#fff" fill-opacity="0.02"/><path d="M1232,397L1240,401L1243,406Z" fill="#fff" fill-opacity="0.04"/><path d="M1232,397L1243,406L1229,406Z" fill="#000" fill-opacity="0.02"/><path d="M1229,406L1243,406L1238,418Z" fill="#fff" fill-opacity="0.04"/><path d="M1229,406L1238,418L1232,421Z" fill="#fff" fill-opacity="0.04"/><path d="M1232,421L1238,418L1241,430Z" fill="#fff" fill-opacity="0.06"/><path d="M1232,421L1241,430L1229,426Z" fill="#000" fill-opacity="0.02"/><path d="M1229,426L1241,430L1244,439Z" fill="#000" fill-opacity="0.01"/><path d="M1229,426L1244,439L1228,437Z" fill="#000" fill-opacity="0.02"/><path d="M1228,437L1244,439L1239,446Z" fill="#000" fill-opacity="0.01"/><path d="M1228,437L1239,446L1228,451Z" fill="#fff" fill-opacity="0.05"/><path d="M1228,451L1239,446L1241,456Z" fill="#fff" fill-opacity="0.05"/><path d="M1228,451L1241,456L1226,457Z" fill="#000" fill-opacity="0.02"/><path d="M1226,457L1241,456L1245,468Z" fill="#000" fill-opacity="0.01"/><path d="M1226,457L1245,468L1227,469Z" fill="#000" fill-opacity="0.03"/><path d="M1227,469L1245,468L1243,481Z" fill="#fff" fill-opacity="0.02"/><path d="M1232,476L1243,481L1240,488Z" fill="#000" fill-opacity="0.02"/><path d="M1226,488L1240,488L1239,500Z" fill="#000" fill-opacity="0.03"/><path d="M1226,488L1239,500L1231,501Z" fill="#000" fill-opacity="0.03"/><path d="M1231,501L1239,500L1238,510Z" fill="#000" fill-opacity="0.02"/><path d="M1231,501L1238,510L1226,505Z" fill="#000" fill-opacity="0.01"/><path d="M1227,516L1245,520L1239,526Z" fill="#fff" fill-opacity="0.05"/><path d="M1228,530L1244,535L1231,536Z" fill="#fff" fill-opacity="0.04"/><path d="M1231,536L1244,535L1242,548Z" fill="#000" fill-opacity="0.02"/><path d="M1231,536L1242,548L1227,546Z" fill="#fff" fill-opacity="0.02"/><path d="M1227,546L1242,548L1246,559Z" fill="#000" fill-opacity="0.01"/><path d="M1227,546L1246,559L1227,560Z" fill="#000" fill-opacity="0.03"/><path d="M1227,560L1246,559L1245,567Z" fill="#000" fill-opacity="0.03"/><path d="M1227,560L1245,567L1228,568Z" fill="#fff" fill-opacity="0.03"/><path d="M1228,568L1245,567L1244,577Z" fill="#000" fill-opacity="0.03"/><path d="M1228,568L1244,577L1233,578Z" fill="#000" fill-opacity="0.02"/><path d="M1245,337L1257,336L1254,348Z" fill="#fff" fill-opacity="0.03"/><path d="M1245,337L1254,348L1242,351Z" fill="#fff" fill-opacity="0.06"/><path d="M1242,351L1254,348L1251,360Z" fill="#fff" fill-opacity="0.04"/><path d="M1242,351L1251,360L1242,356Z" fill="#fff" fill-opacity="0.05"/><path d="M1242,356L1252,367L1238,371Z" fill="#fff" fill-opacity="0.02"/><path d="M1238,371L1252,367L1251,377Z" fill="#fff" fill-opacity="0.04"/><path d="M1238,371L1251,377L1244,377Z" fill="#fff" fill-opacity="0.03"/><path d="M1244,377L1251,377L1254,390Z" fill="#fff" fill-opacity="0.05"/><path d="M1242,388L1253,399L1240,401Z" fill="#fff" fill-opacity="0.02"/><path d="M1240,401L1253,399L1251,407Z" fill="#000" fill-opacity="0.02"/><path d="M1240,401L1251,407L1243,406Z" fill="#fff" fill-opacity="0.02"/><path d="M1243,406L1251,407L1254,421Z" fill="#fff" fill-opacity="0.02"/><path d="M1243,406L1254,421L1238,418Z" fill="#fff" fill-opacity="0.05"/><path d="M1238,418L1254,421L1257,429Z" fill="#000" fill-opacity="0.02"/><path d="M1238,418L1257,429L1241,430Z" fill="#000" fill-opacity="0.03"/><path d="M1241,430L1250,437L1244,439Z" fill="#fff" fill-opacity="0.04"/><path d="M1244,439L1250,437L1256,446Z" fill="#fff" fill-opacity="0.02"/><path d="M1244,439L1256,446L1239,446Z" fill="#fff" fill-opacity="0.01"/><path d="M1239,446L1256,446L1255,458Z" fill="#fff" fill-opacity="0.02"/><path d="M1241,456L1250,471L1245,468Z" fill="#fff" fill-opacity="0.03"/><path d="M1245,468L1250,471L1256,476Z" fill="#000" fill-opacity="0.03"/><path d="M1245,468L1256,476L1243,481Z" fill="#fff" fill-opacity="0.02"/><path d="M1243,481L1256,476L1255,487Z" fill="#000" fill-opacity="0.03"/><path d="M1243,481L1255,487L1240,488Z" fill="#fff" fill-opacity="0.01"/><path d="M1240,488L1255,487L1253,498Z" fill="#fff" fill-opacity="0.05"/><path d="M1240,488L1253,498L1239,500Z" fill="#fff" fill-opacity="0.01"/><path d="M1239,500L1252,507L1238,510Z" fill="#000" fill-opacity="0.03"/><path d="M1238,510L1252,507L1253,519Z" fill="#fff" fill-opacity="0.03"/><path d="M1238,510L1253,519L1245,520Z" fill="#000" fill-opacity="0.01"/><path d="M1245,520L1253,519L1252,526Z" fill="#000" fill-opacity="0.02"/><path d="M1245,520L1252,526L1239,526Z" fill="#fff" fill-opacity="0.05"/><path d="M1239,526L1252,526L1256,537Z" fill="#000" fill-opacity="0.02"/><path d="M1239,526L1256,537L1244,535Z" fill="#fff" fill-opacity="0.02"/><path d="M1244,535L1256,537L1258,548Z" fill="#fff" fill-opacity="0.04"/><path d="M1244,535L1258,548L1242,548Z" fill="#fff" fill-opacity="0.02"/><path d="M1242,548L1256,557L1246,559Z" fill="#000" fill-opacity="0.01"/><path d="M1246,559L1257,565L1245,567Z" fill="#000" fill-opacity="0.01"/><path d="M1245,567L1257,565L1251,575Z" fill="#fff" fill-opacity="0.05"/><path d="M1245,567L1251,575L1244,577Z" fill="#000" fill-opacity="0.01"/><path d="M1257,325L1267,329L1263,337Z" fill="#000" fill-opacity="0.01"/><path d="M1257,325L1263,337L1257,336Z" fill="#000" fill-opacity="0.02"/><path d="M1257,336L1263,337L1269,349Z" fill="#fff" fill-opacity="0.02"/><path d="M1254,348L1269,349L1263,356Z" fill="#000" fill-opacity="0.03"/><path d="M1254,348L1263,356L1251,360Z" fill="#000" fill-opacity="0.03"/><path d="M1251,360L1263,365L1252,367Z" fill="#000" fill-opacity="0.01"/><path d="M1252,367L1263,365L1265,375Z" fill="#fff" fill-opacity="0.04"/><path d="M1252,367L1265,375L1251,377Z" fill="#000" fill-opacity="0.02"/><path d="M1251,377L1265,375L1269,387Z" fill="#000" fill-opacity="0.02"/><path d="M1251,377L1269,387L1254,390Z" fill="#fff" fill-opacity="0.02"/><path d="M1254,390L1269,387L1266,399Z" fill="#fff" fill-opacity="0.06"/><path d="M1254,390L1266,399L1253,399Z" fill="#fff" fill-opacity="0.06"/><path d="M1253,399L1266,399L1268,410Z" fill="#fff" fill-opacity="0.01"/><path d="M1253,399L1268,410L1251,407Z" fill="#fff" fill-opacity="0.01"/><path d="M1251,407L1265,417L1254,421Z" fill="#000" fill-opacity="0.02"/><path d="M1254,421L1265,417L1265,425Z" fill="#fff" fill-opacity="0.04"/><path d="M1254,421L1265,425L1257,429Z" fill="#000" fill-opacity="0.03"/><path d="M1257,429L1265,425L1265,439Z" fill="#fff" fill-opacity="0.03"/><path d="M1250,437L1265,439L1270,450Z" fill="#000" fill-opacity="0.01"/><path d="M1250,437L1270,450L1256,446Z" fill="#fff" fill-opacity="0.04"/><path d="M1256,446L1267,459L1255,458Z" fill="#000" fill-opacity="0.03"/><path d="M1250,471L1262,467L1265,479Z" fill="#000" fill-opacity="0.02"/><path d="M1250,471L1265,479L1256,476Z" fill="#000" fill-opacity="0.02"/><path d="M1256,476L1263,487L1255,487Z" fill="#fff" fill-opacity="0.02"/><path d="M1255,487L1263,487L1266,500Z" fill="#fff" fill-opacity="0.02"/><path d="M1253,498L1266,500L1269,509Z" fill="#000" fill-opacity="0.01"/><path d="M1252,507L1263,520L1253,519Z" fill="#fff" fill-opacity="0.02"/><path d="M1253,519L1263,520L1269,528Z" fill="#000" fill-opacity="0.02"/><path d="M1252,526L1269,528L1265,538Z" fill="#fff" fill-opacity="0.03"/><path d="M1252,526L1265,538L1256,537Z" fill="#fff" fill-opacity="0.02"/><path d="M1256,537L1265,538L1263,549Z" fill="#fff" fill-opacity="0.03"/><path d="M1256,537L1263,549L1258,548Z" fill="#fff" fill-opacity="0.05"/><path d="M1258,548L1263,549L1270,558Z" fill="#fff" fill-opacity="0.04"/><path d="M1258,548L1270,558L1256,557Z" fill="#fff" fill-opacity="0.03"/><path d="M1256,557L1270,558L1268,570Z" fill="#fff" fill-opacity="0.03"/><path d="M1256,557L1268,570L1257,565Z" fill="#fff" fill-opacity="0.05"/><path d="M1257,565L1264,581L1251,575Z" fill="#fff" fill-opacity="0.04"/><path d="M1267,329L1279,326L1275,336Z" fill="#fff" fill-opacity="0.05"/><path d="M1267,329L1275,336L1263,337Z" fill="#000" fill-opacity="0.02"/><path d="M1263,337L1275,336L1279,349Z" fill="#000" fill-opacity="0.03"/><path d="M1263,337L1279,349L1269,349Z" fill="#000" fill-opacity="0.02"/><path d="M1269,349L1279,349L1277,361Z" fill="#000" fill-opacity="0.03"/><path d="M1269,349L1277,361L1263,356Z" fill="#fff" fill-opacity="0.04"/><path d="M1263,356L1277,361L1277,368Z" fill="#000" fill-opacity="0.03"/><path d="M1263,365L1277,368L1275,381Z" fill="#fff" fill-opacity="0.05"/><path d="M1263,365L1275,381L1265,375Z" fill="#fff" fill-opacity="0.02"/><path d="M1265,375L1275,381L1275,391Z" fill="#000" fill-opacity="0.02"/><path d="M1269,387L1275,391L1278,398Z" fill="#fff" fill-opacity="0.03"/><path d="M1269,387L1278,398L1266,399Z" fill="#000" fill-opacity="0.02"/><path d="M1266,399L1278,406L1268,410Z" fill="#fff" fill-opacity="0.06"/><path d="M1268,410L1278,406L1281,421Z" fill="#000" fill-opacity="0.02"/><path d="M1268,410L1281,421L1265,417Z" fill="#000" fill-opacity="0.02"/><path d="M1265,417L1281,421L1281,429Z" fill="#000" fill-opacity="0.01"/><path d="M1265,417L1281,429L1265,425Z" fill="#000" fill-opacity="0.02"/><path d="M1265,425L1281,429L1275,440Z" fill="#000" fill-opacity="0.02"/><path d="M1265,425L1275,440L1265,439Z" fill="#fff" fill-opacity="0.06"/><path d="M1265,439L1275,440L1276,451Z" fill="#fff" fill-opacity="0.05"/><path d="M1270,450L1276,451L1276,459Z" fill="#fff" fill-opacity="0.04"/><path d="M1270,450L1276,459L1267,459Z" fill="#fff" fill-opacity="0.02"/><path d="M1267,459L1276,459L1281,466Z" fill="#fff" fill-opacity="0.02"/><path d="M1262,467L1281,466L1278,475Z" fill="#000" fill-opacity="0.03"/><path d="M1265,479L1274,486L1263,487Z" fill="#fff" fill-opacity="0.05"/><path d="M1263,487L1282,501L1266,500Z" fill="#fff" fill-opacity="0.06"/><path d="M1266,500L1282,501L1279,507Z" fill="#fff" fill-opacity="0.03"/><path d="M1266,500L1279,507L1269,509Z" fill="#fff" fill-opacity="0.05"/><path d="M1269,509L1279,507L1279,520Z" fill="#fff" fill-opacity="0.02"/><path d="M1269,509L1279,520L1263,520Z" fill="#fff" fill-opacity="0.04"/><path d="M1263,520L1279,520L1277,529Z" fill="#000" fill-opacity="0.02"/><path d="M1263,520L1277,529L1269,528Z" fill="#000" fill-opacity="0.03"/><path d="M1269,528L1280,535L1265,538Z" fill="#fff" fill-opacity="0.06"/><path d="M1265,538L1280,535L1276,548Z" fill="#fff" fill-opacity="0.05"/><path d="M1265,538L1276,548L1263,549Z" fill="#fff" fill-opacity="0.05"/><path d="M1263,549L1275,557L1270,558Z" fill="#fff" fill-opacity="0.05"/><path d="M1270,558L1279,566L1268,570Z" fill="#000" fill-opacity="0.03"/><path d="M1268,570L1279,566L1278,576Z" fill="#fff" fill-opacity="0.05"/><path d="M1268,570L1278,576L1264,581Z" fill="#fff" fill-opacity="0.03"/><path d="M1279,326L1291,327L1291,335Z" fill="#fff" fill-opacity="0.04"/><path d="M1279,326L1291,335L1275,336Z" fill="#fff" fill-opacity="0.02"/><path d="M1275,336L1291,346L1279,349Z" fill="#fff" fill-opacity="0.04"/><path d="M1279,349L1291,346L1294,359Z" fill="#fff" fill-opacity="0.03"/><path d="M1279,349L1294,359L1277,361Z" fill="#000" fill-opacity="0.02"/><path d="M1277,361L1294,359L1290,367Z" fill="#fff" fill-opacity="0.03"/><path d="M1275,381L1291,379L1292,390Z" fill="#000" fill-opacity="0.02"/><path d="M1275,381L1292,390L1275,391Z" fill="#fff" fill-opacity="0.04"/><path d="M1275,391L1292,390L1290,401Z" fill="#000" fill-opacity="0.03"/><path d="M1275,391L1290,401L1278,398Z" fill="#fff" fill-opacity="0.04"/><path d="M1278,398L1290,401L1293,410Z" fill="#fff" fill-opacity="0.02"/><path d="M1278,406L1289,418L1281,421Z" fill="#fff" fill-opacity="0.05"/><path d="M1281,421L1289,418L1291,431Z" fill="#fff" fill-opacity="0.04"/><path d="M1281,421L1291,431L1281,429Z" fill="#fff" fill-opacity="0.06"/><path d="M1281,429L1291,431L1290,438Z" fill="#fff" fill-opacity="0.06"/><path d="M1275,440L1290,438L1289,451Z" fill="#fff" fill-opacity="0.04"/><path d="M1275,440L1289,451L1276,451Z" fill="#fff" fill-opacity="0.04"/><path d="M1276,451L1289,455L1276,459Z" fill="#fff" fill-opacity="0.04"/><path d="M1276,459L1289,455L1292,471Z" fill="#fff" fill-opacity="0.04"/><path d="M1276,459L1292,471L1281,466Z" fill="#fff" fill-opacity="0.05"/><path d="M1281,466L1292,471L1292,479Z" fill="#fff" fill-opacity="0.03"/><path d="M1281,466L1292,479L1278,475Z" fill="#fff" fill-opacity="0.02"/><path d="M1278,475L1292,479L1292,487Z" fill="#000" fill-opacity="0.01"/><path d="M1278,475L1292,487L1274,486Z" fill="#000" fill-opacity="0.03"/><path d="M1282,501L1291,495L1287,508Z" fill="#000" fill-opacity="0.01"/><path d="M1282,501L1287,508L1279,507Z" fill="#000" fill-opacity="0.02"/><path d="M1279,507L1287,508L1290,517Z" fill="#000" fill-opacity="0.03"/><path d="M1279,507L1290,517L1279,520Z" fill="#000" fill-opacity="0.03"/><path d="M1279,520L1290,517L1286,529Z" fill="#000" fill-opacity="0.02"/><path d="M1277,529L1286,529L1290,536Z" fill="#000" fill-opacity="0.03"/><path d="M1277,529L1290,536L1280,535Z" fill="#000" fill-opacity="0.02"/><path d="M1280,535L1290,536L1288,547Z" fill="#fff" fill-opacity="0.02"/><path d="M1276,548L1288,555L1275,557Z" fill="#fff" fill-opacity="0.05"/><path d="M1275,557L1288,555L1293,571Z" fill="#fff" fill-opacity="0.04"/><path d="M1275,557L1293,571L1279,566Z" fill="#fff" fill-opacity="0.04"/><path d="M1279,566L1291,581L1278,576Z" fill="#fff" fill-opacity="0.05"/><path d="M1291,327L1301,330L1300,340Z" fill="#fff" fill-opacity="0.05"/><path d="M1291,327L1300,340L1291,335Z" fill="#000" fill-opacity="0.02"/><path d="M1291,335L1300,340L1303,351Z" fill="#fff" fill-opacity="0.04"/><path d="M1291,335L1303,351L1291,346Z" fill="#000" fill-opacity="0.03"/><path d="M1291,346L1303,351L1299,360Z" fill="#fff" fill-opacity="0.02"/><path d="M1291,346L1299,360L1294,359Z" fill="#fff" fill-opacity="0.02"/><path d="M1294,359L1299,360L1299,368Z" fill="#000" fill-opacity="0.02"/><path d="M1290,367L1299,368L1306,375Z" fill="#000" fill-opacity="0.02"/><path d="M1290,367L1306,375L1291,379Z" fill="#000" fill-opacity="0.02"/><path d="M1291,379L1306,375L1300,387Z" fill="#fff" fill-opacity="0.06"/><path d="M1291,379L1300,387L1292,390Z" fill="#fff" fill-opacity="0.06"/><path d="M1292,390L1300,387L1301,395Z" fill="#000" fill-opacity="0.03"/><path d="M1292,390L1301,395L1290,401Z" fill="#000" fill-opacity="0.02"/><path d="M1293,410L1305,410L1301,417Z" fill="#fff" fill-opacity="0.03"/><path d="M1293,410L1301,417L1289,418Z" fill="#000" fill-opacity="0.03"/><path d="M1289,418L1301,417L1303,425Z" fill="#000" fill-opacity="0.03"/><path d="M1289,418L1303,425L1291,431Z" fill="#fff" fill-opacity="0.03"/><path d="M1290,438L1298,441L1300,448Z" fill="#fff" fill-opacity="0.06"/><path d="M1289,451L1300,448L1305,461Z" fill="#fff" fill-opacity="0.04"/><path d="M1289,451L1305,461L1289,455Z" fill="#000" fill-opacity="0.03"/><path d="M1289,455L1305,461L1302,466Z" fill="#fff" fill-opacity="0.02"/><path d="M1289,455L1302,466L1292,471Z" fill="#fff" fill-opacity="0.02"/><path d="M1292,471L1302,466L1300,481Z" fill="#000" fill-opacity="0.03"/><path d="M1292,471L1300,481L1292,479Z" fill="#000" fill-opacity="0.03"/><path d="M1292,479L1305,486L1292,487Z" fill="#000" fill-opacity="0.03"/><path d="M1292,487L1305,486L1305,497Z" fill="#fff" fill-opacity="0.06"/><path d="M1291,495L1302,506L1287,508Z" fill="#fff" fill-opacity="0.04"/><path d="M1287,508L1302,506L1305,521Z" fill="#fff" fill-opacity="0.02"/><path d="M1290,517L1300,529L1286,529Z" fill="#fff" fill-opacity="0.03"/><path d="M1286,529L1300,529L1300,541Z" fill="#000" fill-opacity="0.03"/><path d="M1286,529L1300,541L1290,536Z" fill="#000" fill-opacity="0.03"/><path d="M1290,536L1298,545L1288,547Z" fill="#000" fill-opacity="0.02"/><path d="M1288,547L1304,557L1288,555Z" fill="#fff" fill-opacity="0.01"/><path d="M1288,555L1304,557L1305,571Z" fill="#fff" fill-opacity="0.05"/><path d="M1288,555L1305,571L1293,571Z" fill="#fff" fill-opacity="0.01"/><path d="M1293,571L1305,571L1304,575Z" fill="#000" fill-opacity="0.03"/><path d="M1293,571L1304,575L1291,581Z" fill="#fff" fill-opacity="0.06"/><path d="M1301,330L1314,335L1300,340Z" fill="#000" fill-opacity="0.03"/><path d="M1300,340L1314,335L1312,347Z" fill="#000" fill-opacity="0.01"/><path d="M1300,340L1312,347L1303,351Z" fill="#000" fill-opacity="0.03"/><path d="M1299,360L1316,356L1311,366Z" fill="#000" fill-opacity="0.02"/><path d="M1299,368L1315,380L1306,375Z" fill="#000" fill-opacity="0.03"/><path d="M1306,375L1315,380L1313,389Z" fill="#000" fill-opacity="0.03"/><path d="M1306,375L1313,389L1300,387Z" fill="#000" fill-opacity="0.01"/><path d="M1300,387L1317,399L1301,395Z" fill="#fff" fill-opacity="0.03"/><path d="M1301,395L1317,399L1312,407Z" fill="#fff" fill-opacity="0.06"/><path d="M1301,395L1312,407L1305,410Z" fill="#fff" fill-opacity="0.01"/><path d="M1305,410L1312,407L1317,419Z" fill="#000" fill-opacity="0.02"/><path d="M1305,410L1317,419L1301,417Z" fill="#000" fill-opacity="0.02"/><path d="M1301,417L1317,419L1312,429Z" fill="#000" fill-opacity="0.02"/><path d="M1303,425L1312,429L1311,441Z" fill="#000" fill-opacity="0.03"/><path d="M1303,425L1311,441L1298,441Z" fill="#fff" fill-opacity="0.05"/><path d="M1298,441L1311,441L1314,448Z" fill="#000" fill-opacity="0.03"/><path d="M1298,441L1314,448L1300,448Z" fill="#000" fill-opacity="0.03"/><path d="M1300,448L1314,448L1314,455Z" fill="#fff" fill-opacity="0.01"/><path d="M1305,461L1314,455L1315,466Z" fill="#000" fill-opacity="0.03"/><path d="M1305,461L1315,466L1302,466Z" fill="#fff" fill-opacity="0.03"/><path d="M1302,466L1315,466L1312,480Z" fill="#000" fill-opacity="0.02"/><path d="M1300,481L1312,480L1311,486Z" fill="#fff" fill-opacity="0.04"/><path d="M1300,481L1311,486L1305,486Z" fill="#fff" fill-opacity="0.05"/><path d="M1305,486L1311,486L1316,496Z" fill="#000" fill-opacity="0.01"/><path d="M1305,486L1316,496L1305,497Z" fill="#000" fill-opacity="0.02"/><path d="M1305,497L1316,496L1312,508Z" fill="#000" fill-opacity="0.03"/><path d="M1305,497L1312,508L1302,506Z" fill="#fff" fill-opacity="0.05"/><path d="M1302,506L1312,508L1311,521Z" fill="#fff" fill-opacity="0.05"/><path d="M1302,506L1311,521L1305,521Z" fill="#fff" fill-opacity="0.05"/><path d="M1305,521L1311,521L1318,525Z" fill="#fff" fill-opacity="0.01"/><path d="M1300,529L1318,525L1314,540Z" fill="#fff" fill-opacity="0.03"/><path d="M1300,529L1314,540L1300,541Z" fill="#fff" fill-opacity="0.02"/><path d="M1300,541L1314,540L1313,551Z" fill="#000" fill-opacity="0.03"/><path d="M1300,541L1313,551L1298,545Z" fill="#fff" fill-opacity="0.05"/><path d="M1298,545L1313,551L1314,556Z" fill="#fff" fill-opacity="0.06"/><path d="M1298,545L1314,556L1304,557Z" fill="#000" fill-opacity="0.02"/><path d="M1304,557L1314,556L1314,569Z" fill="#000" fill-opacity="0.02"/><path d="M1304,557L1314,569L1305,571Z" fill="#fff" fill-opacity="0.03"/><path d="M1305,571L1314,569L1313,579Z" fill="#000" fill-opacity="0.02"/><path d="M1305,571L1313,579L1304,575Z" fill="#000" fill-opacity="0.02"/><path d="M1316,331L1328,328L1326,340Z" fill="#000" fill-opacity="0.01"/><path d="M1316,331L1326,340L1314,335Z" fill="#fff" fill-opacity="0.04"/><path d="M1314,335L1326,340L1327,348Z" fill="#fff" fill-opacity="0.03"/><path d="M1312,347L1327,348L1330,356Z" fill="#fff" fill-opacity="0.03"/><path d="M1311,366L1327,376L1315,380Z" fill="#fff" fill-opacity="0.04"/><path d="M1315,380L1327,376L1326,390Z" fill="#fff" fill-opacity="0.03"/><path d="M1313,389L1326,390L1328,400Z" fill="#fff" fill-opacity="0.04"/><path d="M1313,389L1328,400L1317,399Z" fill="#fff" fill-opacity="0.04"/><path d="M1317,399L1324,408L1312,407Z" fill="#000" fill-opacity="0.03"/><path d="M1312,407L1324,408L1324,419Z" fill="#fff" fill-opacity="0.04"/><path d="M1317,419L1324,419L1326,425Z" fill="#fff" fill-opacity="0.02"/><path d="M1317,419L1326,425L1312,429Z" fill="#fff" fill-opacity="0.01"/><path d="M1312,429L1327,440L1311,441Z" fill="#000" fill-opacity="0.03"/><path d="M1311,441L1327,451L1314,448Z" fill="#000" fill-opacity="0.02"/><path d="M1314,448L1327,451L1323,456Z" fill="#000" fill-opacity="0.02"/><path d="M1314,448L1323,456L1314,455Z" fill="#fff" fill-opacity="0.04"/><path d="M1314,455L1323,456L1322,468Z" fill="#000" fill-opacity="0.02"/><path d="M1314,455L1322,468L1315,466Z" fill="#000" fill-opacity="0.03"/><path d="M1315,466L1322,468L1325,478Z" fill="#000" fill-opacity="0.03"/><path d="M1315,466L1325,478L1312,480Z" fill="#fff" fill-opacity="0.05"/><path d="M1312,480L1325,478L1324,490Z" fill="#000" fill-opacity="0.03"/><path d="M1312,480L1324,490L1311,486Z" fill="#fff" fill-opacity="0.02"/><path d="M1311,486L1324,490L1323,501Z" fill="#fff" fill-opacity="0.02"/><path d="M1316,496L1323,501L1327,508Z" fill="#fff" fill-opacity="0.01"/><path d="M1316,496L1327,508L1312,508Z" fill="#000" fill-opacity="0.03"/><path d="M1312,508L1327,508L1328,516Z" fill="#000" fill-opacity="0.03"/><path d="M1312,508L1328,516L1311,521Z" fill="#000" fill-opacity="0.01"/><path d="M1311,521L1328,516L1323,527Z" fill="#fff" fill-opacity="0.05"/><path d="M1311,521L1323,527L1318,525Z" fill="#fff" fill-opacity="0.06"/><path d="M1318,525L1323,527L1322,537Z" fill="#fff" fill-opacity="0.06"/><path d="M1318,525L1322,537L1314,540Z" fill="#fff" fill-opacity="0.03"/><path d="M1314,540L1322,537L1327,548Z" fill="#000" fill-opacity="0.01"/><path d="M1314,540L1327,548L1313,551Z" fill="#fff" fill-opacity="0.01"/><path d="M1313,551L1327,548L1324,559Z" fill="#fff" fill-opacity="0.05"/><path d="M1313,551L1324,559L1314,556Z" fill="#fff" fill-opacity="0.01"/><path d="M1314,556L1324,559L1323,570Z" fill="#000" fill-opacity="0.01"/><path d="M1314,556L1323,570L1314,569Z" fill="#000" fill-opacity="0.03"/><path d="M1314,569L1323,570L1323,576Z" fill="#fff" fill-opacity="0.03"/><path d="M1314,569L1323,576L1313,579Z" fill="#fff" fill-opacity="0.03"/><path d="M1328,328L1335,329L1341,340Z" fill="#fff" fill-opacity="0.03"/><path d="M1328,328L1341,340L1326,340Z" fill="#fff" fill-opacity="0.01"/><path d="M1326,340L1341,340L1334,347Z" fill="#000" fill-opacity="0.02"/><path d="M1326,340L1334,347L1327,348Z" fill="#fff" fill-opacity="0.06"/><path d="M1327,348L1334,347L1337,356Z" fill="#000" fill-opacity="0.02"/><path d="M1327,348L1337,356L1330,356Z" fill="#fff" fill-opacity="0.03"/><path d="M1330,356L1337,356L1342,365Z" fill="#000" fill-opacity="0.03"/><path d="M1327,376L1338,380L1342,386Z" fill="#fff" fill-opacity="0.01"/><path d="M1327,376L1342,386L1326,390Z" fill="#fff" fill-opacity="0.04"/><path d="M1326,390L1342,386L1338,400Z" fill="#fff" fill-opacity="0.03"/><path d="M1326,390L1338,400L1328,400Z" fill="#fff" fill-opacity="0.02"/><path d="M1328,400L1338,400L1334,406Z" fill="#fff" fill-opacity="0.04"/><path d="M1328,400L1334,406L1324,408Z" fill="#000" fill-opacity="0.03"/><path d="M1324,408L1334,406L1341,415Z" fill="#fff" fill-opacity="0.06"/><path d="M1324,408L1341,415L1324,419Z" fill="#fff" fill-opacity="0.03"/><path d="M1324,419L1341,415L1337,427Z" fill="#fff" fill-opacity="0.02"/><path d="M1324,419L1337,427L1326,425Z" fill="#000" fill-opacity="0.02"/><path d="M1326,425L1337,427L1337,435Z" fill="#fff" fill-opacity="0.04"/><path d="M1326,425L1337,435L1327,440Z" fill="#000" fill-opacity="0.03"/><path d="M1327,440L1337,435L1334,451Z" fill="#fff" fill-opacity="0.03"/><path d="M1327,440L1334,451L1327,451Z" fill="#fff" fill-opacity="0.04"/><path d="M1327,451L1340,460L1323,456Z" fill="#000" fill-opacity="0.02"/><path d="M1323,456L1340,460L1336,466Z" fill="#fff" fill-opacity="0.04"/><path d="M1323,456L1336,466L1322,468Z" fill="#fff" fill-opacity="0.03"/><path d="M1322,468L1336,466L1338,476Z" fill="#fff" fill-opacity="0.04"/><path d="M1322,468L1338,476L1325,478Z" fill="#fff" fill-opacity="0.03"/><path d="M1325,478L1338,476L1338,491Z" fill="#fff" fill-opacity="0.03"/><path d="M1325,478L1338,491L1324,490Z" fill="#000" fill-opacity="0.02"/><path d="M1324,490L1338,491L1337,497Z" fill="#fff" fill-opacity="0.03"/><path d="M1324,490L1337,497L1323,501Z" fill="#fff" fill-opacity="0.03"/><path d="M1323,501L1337,497L1342,509Z" fill="#000" fill-opacity="0.02"/><path d="M1327,508L1342,509L1334,517Z" fill="#fff" fill-opacity="0.01"/><path d="M1327,508L1334,517L1328,516Z" fill="#fff" fill-opacity="0.01"/><path d="M1328,516L1334,517L1339,525Z" fill="#fff" fill-opacity="0.06"/><path d="M1328,516L1339,525L1323,527Z" fill="#000" fill-opacity="0.03"/><path d="M1323,527L1339,525L1337,539Z" fill="#000" fill-opacity="0.03"/><path d="M1323,527L1337,539L1322,537Z" fill="#fff" fill-opacity="0.03"/><path d="M1322,537L1337,539L1341,549Z" fill="#fff" fill-opacity="0.03"/><path d="M1322,537L1341,549L1327,548Z" fill="#000" fill-opacity="0.01"/><path d="M1327,548L1341,549L1341,558Z" fill="#000" fill-opacity="0.03"/><path d="M1327,548L1341,558L1324,559Z" fill="#000" fill-opacity="0.02"/><path d="M1324,559L1341,558L1337,570Z" fill="#fff" fill-opacity="0.03"/><path d="M1324,559L1337,570L1323,570Z" fill="#fff" fill-opacity="0.04"/><path d="M1323,570L1337,570L1337,580Z" fill="#000" fill-opacity="0.03"/><path d="M1323,570L1337,580L1323,576Z" fill="#fff" fill-opacity="0.02"/><path d="M1335,329L1348,327L1347,338Z" fill="#fff" fill-opacity="0.05"/><path d="M1335,329L1347,338L1341,340Z" fill="#000" fill-opacity="0.02"/><path d="M1341,340L1347,338L1347,346Z" fill="#fff" fill-opacity="0.02"/><path d="M1334,347L1347,346L1348,358Z" fill="#000" fill-opacity="0.01"/><path d="M1334,347L1348,358L1337,356Z" fill="#fff" fill-opacity="0.02"/><path d="M1337,356L1348,358L1348,368Z" fill="#fff" fill-opacity="0.03"/><path d="M1337,356L1348,368L1342,365Z" fill="#fff" fill-opacity="0.05"/><path d="M1342,365L1348,368L1354,379Z" fill="#000" fill-opacity="0.03"/><path d="M1342,365L1354,379L1338,380Z" fill="#fff" fill-opacity="0.02"/><path d="M1338,380L1354,379L1353,386Z" fill="#000" fill-opacity="0.02"/><path d="M1338,380L1353,386L1342,386Z" fill="#000" fill-opacity="0.02"/><path d="M1342,386L1353,386L1349,395Z" fill="#000" fill-opacity="0.03"/><path d="M1342,386L1349,395L1338,400Z" fill="#000" fill-opacity="0.03"/><path d="M1338,400L1349,395L1352,407Z" fill="#000" fill-opacity="0.01"/><path d="M1338,400L1352,407L1334,406Z" fill="#fff" fill-opacity="0.03"/><path d="M1334,406L1352,407L1348,415Z" fill="#fff" fill-opacity="0.03"/><path d="M1334,406L1348,415L1341,415Z" fill="#fff" fill-opacity="0.04"/><path d="M1341,415L1348,415L1347,426Z" fill="#000" fill-opacity="0.03"/><path d="M1337,427L1347,426L1349,441Z" fill="#fff" fill-opacity="0.02"/><path d="M1337,435L1349,441L1352,446Z" fill="#fff" fill-opacity="0.05"/><path d="M1334,451L1349,456L1340,460Z" fill="#000" fill-opacity="0.02"/><path d="M1340,460L1349,456L1353,467Z" fill="#fff" fill-opacity="0.04"/><path d="M1340,460L1353,467L1336,466Z" fill="#fff" fill-opacity="0.04"/><path d="M1336,466L1353,467L1352,480Z" fill="#fff" fill-opacity="0.04"/><path d="M1336,466L1352,480L1338,476Z" fill="#000" fill-opacity="0.01"/><path d="M1338,476L1353,485L1338,491Z" fill="#fff" fill-opacity="0.03"/><path d="M1338,491L1353,485L1349,497Z" fill="#000" fill-opacity="0.02"/><path d="M1338,491L1349,497L1337,497Z" fill="#fff" fill-opacity="0.02"/><path d="M1342,509L1347,511L1349,520Z" fill="#fff" fill-opacity="0.04"/><path d="M1342,509L1349,520L1334,517Z" fill="#000" fill-opacity="0.02"/><path d="M1334,517L1349,520L1350,525Z" fill="#fff" fill-opacity="0.05"/><path d="M1334,517L1350,525L1339,525Z" fill="#fff" fill-opacity="0.02"/><path d="M1339,525L1350,525L1349,536Z" fill="#fff" fill-opacity="0.03"/><path d="M1339,525L1349,536L1337,539Z" fill="#fff" fill-opacity="0.01"/><path d="M1337,539L1349,536L1346,546Z" fill="#000" fill-opacity="0.02"/><path d="M1341,549L1346,546L1351,555Z" fill="#000" fill-opacity="0.02"/><path d="M1341,558L1351,555L1348,567Z" fill="#fff" fill-opacity="0.03"/><path d="M1341,558L1348,567L1337,570Z" fill="#000" fill-opacity="0.02"/><path d="M1337,570L1348,567L1350,575Z" fill="#fff" fill-opacity="0.04"/><path d="M1337,570L1350,575L1337,580Z" fill="#000" fill-opacity="0.02"/><path d="M1348,327L1364,326L1364,339Z" fill="#fff" fill-opacity="0.05"/><path d="M1348,327L1364,339L1347,338Z" fill="#fff" fill-opacity="0.01"/><path d="M1347,338L1359,346L1347,346Z" fill="#000" fill-opacity="0.02"/><path d="M1347,346L1359,346L1360,359Z" fill="#000" fill-opacity="0.02"/><path d="M1347,346L1360,359L1348,358Z" fill="#000" fill-opacity="0.03"/><path d="M1348,358L1360,359L1361,367Z" fill="#000" fill-opacity="0.03"/><path d="M1348,358L1361,367L1348,368Z" fill="#fff" fill-opacity="0.03"/><path d="M1348,368L1361,367L1365,376Z" fill="#fff" fill-opacity="0.03"/><path d="M1354,379L1365,376L1360,387Z" fill="#fff" fill-opacity="0.06"/><path d="M1354,379L1360,387L1353,386Z" fill="#fff" fill-opacity="0.02"/><path d="M1353,386L1360,387L1360,395Z" fill="#fff" fill-opacity="0.02"/><path d="M1353,386L1360,395L1349,395Z" fill="#000" fill-opacity="0.03"/><path d="M1349,395L1360,395L1358,409Z" fill="#000" fill-opacity="0.02"/><path d="M1352,407L1358,409L1363,420Z" fill="#fff" fill-opacity="0.02"/><path d="M1348,415L1363,420L1366,427Z" fill="#fff" fill-opacity="0.03"/><path d="M1348,415L1366,427L1347,426Z" fill="#fff" fill-opacity="0.03"/><path d="M1347,426L1366,427L1363,441Z" fill="#fff" fill-opacity="0.03"/><path d="M1347,426L1363,441L1349,441Z" fill="#000" fill-opacity="0.02"/><path d="M1349,441L1363,441L1360,449Z" fill="#000" fill-opacity="0.01"/><path d="M1349,441L1360,449L1352,446Z" fill="#fff" fill-opacity="0.03"/><path d="M1349,456L1365,466L1353,467Z" fill="#000" fill-opacity="0.03"/><path d="M1353,467L1365,466L1363,475Z" fill="#fff" fill-opacity="0.02"/><path d="M1353,467L1363,475L1352,480Z" fill="#000" fill-opacity="0.03"/><path d="M1353,485L1361,487L1358,497Z" fill="#000" fill-opacity="0.03"/><path d="M1353,485L1358,497L1349,497Z" fill="#fff" fill-opacity="0.01"/><path d="M1349,497L1358,497L1361,508Z" fill="#fff" fill-opacity="0.05"/><path d="M1349,497L1361,508L1347,511Z" fill="#fff" fill-opacity="0.03"/><path d="M1347,511L1360,516L1349,520Z" fill="#000" fill-opacity="0.02"/><path d="M1349,520L1360,516L1361,528Z" fill="#fff" fill-opacity="0.03"/><path d="M1349,520L1361,528L1350,525Z" fill="#fff" fill-opacity="0.03"/><path d="M1350,525L1361,528L1359,539Z" fill="#fff" fill-opacity="0.02"/><path d="M1350,525L1359,539L1349,536Z" fill="#fff" fill-opacity="0.03"/><path d="M1349,536L1359,539L1360,545Z" fill="#fff" fill-opacity="0.06"/><path d="M1349,536L1360,545L1346,546Z" fill="#fff" fill-opacity="0.05"/><path d="M1346,546L1360,545L1361,557Z" fill="#fff" fill-opacity="0.03"/><path d="M1351,555L1361,557L1359,569Z" fill="#fff" fill-opacity="0.01"/><path d="M1351,555L1359,569L1348,567Z" fill="#fff" fill-opacity="0.03"/><path d="M1348,567L1359,569L1364,578Z" fill="#fff" fill-opacity="0.03"/><path d="M1348,567L1364,578L1350,575Z" fill="#000" fill-opacity="0.01"/><path d="M1364,326L1376,325L1373,337Z" fill="#fff" fill-opacity="0.05"/><path d="M1364,326L1373,337L1364,339Z" fill="#000" fill-opacity="0.01"/><path d="M1364,339L1373,337L1371,347Z" fill="#000" fill-opacity="0.02"/><path d="M1364,339L1371,347L1359,346Z" fill="#fff" fill-opacity="0.05"/><path d="M1359,346L1371,347L1370,358Z" fill="#fff" fill-opacity="0.05"/><path d="M1359,346L1370,358L1360,359Z" fill="#fff" fill-opacity="0.06"/><path d="M1360,359L1370,358L1375,368Z" fill="#000" fill-opacity="0.02"/><path d="M1360,359L1375,368L1361,367Z" fill="#fff" fill-opacity="0.02"/><path d="M1361,367L1375,368L1373,376Z" fill="#fff" fill-opacity="0.03"/><path d="M1361,367L1373,376L1365,376Z" fill="#fff" fill-opacity="0.03"/><path d="M1365,376L1370,387L1360,387Z" fill="#000" fill-opacity="0.02"/><path d="M1360,387L1377,398L1360,395Z" fill="#fff" fill-opacity="0.06"/><path d="M1360,395L1377,398L1372,409Z" fill="#fff" fill-opacity="0.02"/><path d="M1360,395L1372,409L1358,409Z" fill="#000" fill-opacity="0.03"/><path d="M1358,409L1372,409L1371,418Z" fill="#000" fill-opacity="0.01"/><path d="M1358,409L1371,418L1363,420Z" fill="#fff" fill-opacity="0.04"/><path d="M1363,420L1371,418L1375,431Z" fill="#fff" fill-opacity="0.05"/><path d="M1363,420L1375,431L1366,427Z" fill="#000" fill-opacity="0.02"/><path d="M1366,427L1375,431L1373,439Z" fill="#000" fill-opacity="0.01"/><path d="M1366,427L1373,439L1363,441Z" fill="#fff" fill-opacity="0.05"/><path d="M1363,441L1373,439L1378,450Z" fill="#000" fill-opacity="0.02"/><path d="M1360,449L1378,450L1375,459Z" fill="#000" fill-opacity="0.02"/><path d="M1360,449L1375,459L1363,461Z" fill="#fff" fill-opacity="0.04"/><path d="M1363,461L1375,459L1373,467Z" fill="#000" fill-opacity="0.03"/><path d="M1363,461L1373,467L1365,466Z" fill="#fff" fill-opacity="0.03"/><path d="M1365,466L1373,467L1372,480Z" fill="#fff" fill-opacity="0.01"/><path d="M1365,466L1372,480L1363,475Z" fill="#000" fill-opacity="0.02"/><path d="M1363,475L1372,480L1377,487Z" fill="#fff" fill-opacity="0.06"/><path d="M1361,487L1377,487L1377,495Z" fill="#fff" fill-opacity="0.03"/><path d="M1361,487L1377,495L1358,497Z" fill="#000" fill-opacity="0.03"/><path d="M1358,497L1377,495L1371,508Z" fill="#fff" fill-opacity="0.05"/><path d="M1358,497L1371,508L1361,508Z" fill="#fff" fill-opacity="0.02"/><path d="M1361,508L1371,508L1372,517Z" fill="#fff" fill-opacity="0.03"/><path d="M1361,508L1372,517L1360,516Z" fill="#000" fill-opacity="0.02"/><path d="M1361,528L1378,526L1372,536Z" fill="#fff" fill-opacity="0.04"/><path d="M1361,528L1372,536L1359,539Z" fill="#000" fill-opacity="0.03"/><path d="M1359,539L1372,536L1375,546Z" fill="#fff" fill-opacity="0.04"/><path d="M1359,539L1375,546L1360,545Z" fill="#000" fill-opacity="0.03"/><path d="M1360,545L1375,546L1370,558Z" fill="#000" fill-opacity="0.03"/><path d="M1360,545L1370,558L1361,557Z" fill="#000" fill-opacity="0.03"/><path d="M1361,557L1370,558L1373,566Z" fill="#fff" fill-opacity="0.01"/><path d="M1359,569L1373,566L1374,579Z" fill="#000" fill-opacity="0.01"/><path d="M1359,569L1374,579L1364,578Z" fill="#000" fill-opacity="0.01"/><path d="M1376,325L1386,329L1386,340Z" fill="#000" fill-opacity="0.01"/><path d="M1376,325L1386,340L1373,337Z" fill="#000" fill-opacity="0.03"/><path d="M1373,337L1386,340L1390,347Z" fill="#000" fill-opacity="0.02"/><path d="M1373,337L1390,347L1371,347Z" fill="#000" fill-opacity="0.03"/><path d="M1371,347L1390,347L1385,361Z" fill="#fff" fill-opacity="0.04"/><path d="M1371,347L1385,361L1370,358Z" fill="#fff" fill-opacity="0.05"/><path d="M1370,358L1385,361L1385,370Z" fill="#fff" fill-opacity="0.02"/><path d="M1375,368L1385,370L1388,379Z" fill="#000" fill-opacity="0.01"/><path d="M1373,376L1390,390L1370,387Z" fill="#000" fill-opacity="0.02"/><path d="M1370,387L1390,390L1383,399Z" fill="#fff" fill-opacity="0.04"/><path d="M1370,387L1383,399L1377,398Z" fill="#000" fill-opacity="0.02"/><path d="M1377,398L1383,399L1386,408Z" fill="#000" fill-opacity="0.02"/><path d="M1377,398L1386,408L1372,409Z" fill="#000" fill-opacity="0.03"/><path d="M1372,409L1385,416L1371,418Z" fill="#000" fill-opacity="0.03"/><path d="M1371,418L1388,428L1375,431Z" fill="#fff" fill-opacity="0.04"/><path d="M1375,431L1384,436L1373,439Z" fill="#000" fill-opacity="0.03"/><path d="M1373,439L1384,436L1385,446Z" fill="#fff" fill-opacity="0.04"/><path d="M1375,459L1383,465L1373,467Z" fill="#000" fill-opacity="0.02"/><path d="M1373,467L1383,479L1372,480Z" fill="#000" fill-opacity="0.03"/><path d="M1372,480L1383,488L1377,487Z" fill="#fff" fill-opacity="0.02"/><path d="M1377,487L1383,488L1388,498Z" fill="#fff" fill-opacity="0.03"/><path d="M1377,487L1388,498L1377,495Z" fill="#fff" fill-opacity="0.02"/><path d="M1377,495L1388,498L1383,511Z" fill="#000" fill-opacity="0.03"/><path d="M1377,495L1383,511L1371,508Z" fill="#000" fill-opacity="0.03"/><path d="M1371,508L1383,511L1389,515Z" fill="#000" fill-opacity="0.02"/><path d="M1372,517L1389,515L1384,528Z" fill="#000" fill-opacity="0.03"/><path d="M1372,517L1384,528L1378,526Z" fill="#fff" fill-opacity="0.06"/><path d="M1378,526L1384,528L1388,537Z" fill="#fff" fill-opacity="0.04"/><path d="M1378,526L1388,537L1372,536Z" fill="#fff" fill-opacity="0.03"/><path d="M1372,536L1388,537L1388,546Z" fill="#000" fill-opacity="0.02"/><path d="M1372,536L1388,546L1375,546Z" fill="#000" fill-opacity="0.02"/><path d="M1375,546L1388,546L1388,557Z" fill="#000" fill-opacity="0.01"/><path d="M1375,546L1388,557L1370,558Z" fill="#000" fill-opacity="0.03"/><path d="M1370,558L1388,557L1385,570Z" fill="#fff" fill-opacity="0.02"/><path d="M1370,558L1385,570L1373,566Z" fill="#fff" fill-opacity="0.03"/><path d="M1373,566L1385,570L1389,580Z" fill="#000" fill-opacity="0.01"/><path d="M1386,329L1399,327L1400,339Z" fill="#000" fill-opacity="0.03"/><path d="M1386,329L1400,339L1386,340Z" fill="#fff" fill-opacity="0.03"/><path d="M1386,340L1400,339L1401,350Z" fill="#fff" fill-opacity="0.03"/><path d="M1390,347L1401,350L1395,357Z" fill="#000" fill-opacity="0.02"/><path d="M1390,347L1395,357L1385,361Z" fill="#000" fill-opacity="0.02"/><path d="M1385,361L1395,357L1399,366Z" fill="#000" fill-opacity="0.02"/><path d="M1385,361L1399,366L1385,370Z" fill="#000" fill-opacity="0.02"/><path d="M1385,370L1399,366L1395,375Z" fill="#000" fill-opacity="0.02"/><path d="M1388,379L1399,391L1390,390Z" fill="#fff" fill-opacity="0.06"/><path d="M1390,390L1399,391L1402,395Z" fill="#fff" fill-opacity="0.04"/><path d="M1390,390L1402,395L1383,399Z" fill="#fff" fill-opacity="0.06"/><path d="M1383,399L1402,395L1400,407Z" fill="#000" fill-opacity="0.01"/><path d="M1386,408L1400,407L1399,417Z" fill="#fff" fill-opacity="0.02"/><path d="M1386,408L1399,417L1385,416Z" fill="#fff" fill-opacity="0.04"/><path d="M1385,416L1399,417L1401,431Z" fill="#fff" fill-opacity="0.03"/><path d="M1388,428L1401,431L1394,439Z" fill="#fff" fill-opacity="0.06"/><path d="M1388,428L1394,439L1384,436Z" fill="#fff" fill-opacity="0.03"/><path d="M1384,436L1394,439L1395,445Z" fill="#fff" fill-opacity="0.02"/><path d="M1385,446L1395,445L1396,460Z" fill="#fff" fill-opacity="0.03"/><path d="M1385,446L1396,460L1386,455Z" fill="#000" fill-opacity="0.02"/><path d="M1386,455L1396,460L1402,465Z" fill="#fff" fill-opacity="0.04"/><path d="M1386,455L1402,465L1383,465Z" fill="#000" fill-opacity="0.03"/><path d="M1383,465L1402,465L1397,475Z" fill="#000" fill-opacity="0.02"/><path d="M1383,488L1398,488L1397,497Z" fill="#fff" fill-opacity="0.04"/><path d="M1383,488L1397,497L1388,498Z" fill="#000" fill-opacity="0.03"/><path d="M1388,498L1397,497L1400,510Z" fill="#000" fill-opacity="0.02"/><path d="M1388,498L1400,510L1383,511Z" fill="#fff" fill-opacity="0.04"/><path d="M1383,511L1400,510L1396,517Z" fill="#fff" fill-opacity="0.04"/><path d="M1383,511L1396,517L1389,515Z" fill="#fff" fill-opacity="0.02"/><path d="M1389,515L1396,517L1399,530Z" fill="#000" fill-opacity="0.03"/><path d="M1389,515L1399,530L1384,528Z" fill="#fff" fill-opacity="0.04"/><path d="M1384,528L1399,530L1402,537Z" fill="#000" fill-opacity="0.03"/><path d="M1384,528L1402,537L1388,537Z" fill="#000" fill-opacity="0.03"/><path d="M1388,537L1402,537L1400,548Z" fill="#fff" fill-opacity="0.04"/><path d="M1388,537L1400,548L1388,546Z" fill="#000" fill-opacity="0.01"/><path d="M1388,546L1400,556L1388,557Z" fill="#000" fill-opacity="0.01"/><path d="M1388,557L1400,556L1395,565Z" fill="#fff" fill-opacity="0.04"/><path d="M1385,570L1395,565L1401,576Z" fill="#fff" fill-opacity="0.05"/><path d="M1385,570L1401,576L1389,580Z" fill="#fff" fill-opacity="0.01"/><path d="M1399,327L1409,335L1400,339Z" fill="#000" fill-opacity="0.01"/><path d="M1400,339L1411,346L1401,350Z" fill="#000" fill-opacity="0.03"/><path d="M1401,350L1411,346L1411,356Z" fill="#fff" fill-opacity="0.02"/><path d="M1401,350L1411,356L1395,357Z" fill="#000" fill-opacity="0.03"/><path d="M1395,357L1411,356L1408,368Z" fill="#fff" fill-opacity="0.05"/><path d="M1399,366L1408,368L1409,376Z" fill="#fff" fill-opacity="0.04"/><path d="M1399,366L1409,376L1395,375Z" fill="#fff" fill-opacity="0.05"/><path d="M1395,375L1409,376L1406,385Z" fill="#fff" fill-opacity="0.06"/><path d="M1395,375L1406,385L1399,391Z" fill="#fff" fill-opacity="0.03"/><path d="M1399,391L1406,385L1413,397Z" fill="#fff" fill-opacity="0.05"/><path d="M1399,391L1413,397L1402,395Z" fill="#fff" fill-opacity="0.06"/><path d="M1402,395L1413,397L1407,406Z" fill="#000" fill-opacity="0.03"/><path d="M1402,395L1407,406L1400,407Z" fill="#fff" fill-opacity="0.02"/><path d="M1400,407L1407,406L1410,421Z" fill="#000" fill-opacity="0.02"/><path d="M1400,407L1410,421L1399,417Z" fill="#fff" fill-opacity="0.06"/><path d="M1399,417L1410,421L1408,431Z" fill="#fff" fill-opacity="0.04"/><path d="M1399,417L1408,431L1401,431Z" fill="#fff" fill-opacity="0.01"/><path d="M1401,431L1408,431L1410,437Z" fill="#fff" fill-opacity="0.03"/><path d="M1394,439L1410,437L1412,447Z" fill="#000" fill-opacity="0.03"/><path d="M1394,439L1412,447L1395,445Z" fill="#fff" fill-opacity="0.02"/><path d="M1395,445L1412,447L1406,458Z" fill="#000" fill-opacity="0.03"/><path d="M1395,445L1406,458L1396,460Z" fill="#fff" fill-opacity="0.05"/><path d="M1396,460L1411,469L1402,465Z" fill="#000" fill-opacity="0.02"/><path d="M1402,465L1411,469L1408,481Z" fill="#000" fill-opacity="0.03"/><path d="M1397,475L1413,491L1398,488Z" fill="#000" fill-opacity="0.02"/><path d="M1398,488L1413,491L1410,500Z" fill="#fff" fill-opacity="0.03"/><path d="M1398,488L1410,500L1397,497Z" fill="#000" fill-opacity="0.02"/><path d="M1397,497L1410,500L1412,506Z" fill="#fff" fill-opacity="0.02"/><path d="M1400,510L1412,506L1406,516Z" fill="#fff" fill-opacity="0.02"/><path d="M1400,510L1406,516L1396,517Z" fill="#fff" fill-opacity="0.04"/><path d="M1396,517L1406,516L1407,525Z" fill="#000" fill-opacity="0.02"/><path d="M1396,517L1407,525L1399,530Z" fill="#000" fill-opacity="0.03"/><path d="M1399,530L1407,525L1409,540Z" fill="#000" fill-opacity="0.02"/><path d="M1399,530L1409,540L1402,537Z" fill="#fff" fill-opacity="0.05"/><path d="M1402,537L1409,540L1408,548Z" fill="#fff" fill-opacity="0.05"/><path d="M1402,537L1408,548L1400,548Z" fill="#fff" fill-opacity="0.05"/><path d="M1400,556L1414,565L1395,565Z" fill="#fff" fill-opacity="0.02"/><path d="M1395,565L1414,565L1410,580Z" fill="#fff" fill-opacity="0.05"/><path d="M1395,565L1410,580L1401,576Z" fill="#fff" fill-opacity="0.02"/><path d="M1410,325L1421,340L1409,335Z" fill="#000" fill-opacity="0.03"/><path d="M1409,335L1425,350L1411,346Z" fill="#fff" fill-opacity="0.02"/><path d="M1411,346L1425,350L1426,355Z" fill="#fff" fill-opacity="0.03"/><path d="M1411,356L1426,355L1426,367Z" fill="#fff" fill-opacity="0.04"/><path d="M1411,356L1426,367L1408,368Z" fill="#000" fill-opacity="0.03"/><path d="M1408,368L1426,367L1424,376Z" fill="#000" fill-opacity="0.02"/><path d="M1409,376L1424,376L1425,385Z" fill="#000" fill-opacity="0.03"/><path d="M1409,376L1425,385L1406,385Z" fill="#fff" fill-opacity="0.05"/><path d="M1406,385L1423,396L1413,397Z" fill="#fff" fill-opacity="0.03"/><path d="M1413,397L1423,396L1421,407Z" fill="#fff" fill-opacity="0.04"/><path d="M1413,397L1421,407L1407,406Z" fill="#fff" fill-opacity="0.01"/><path d="M1407,406L1423,420L1410,421Z" fill="#000" fill-opacity="0.01"/><path d="M1408,431L1421,429L1421,436Z" fill="#000" fill-opacity="0.03"/><path d="M1408,431L1421,436L1410,437Z" fill="#000" fill-opacity="0.02"/><path d="M1410,437L1421,436L1425,447Z" fill="#fff" fill-opacity="0.02"/><path d="M1412,447L1425,447L1419,457Z" fill="#fff" fill-opacity="0.02"/><path d="M1412,447L1419,457L1406,458Z" fill="#fff" fill-opacity="0.05"/><path d="M1406,458L1419,457L1424,466Z" fill="#000" fill-opacity="0.01"/><path d="M1406,458L1424,466L1411,469Z" fill="#000" fill-opacity="0.03"/><path d="M1411,469L1424,466L1424,478Z" fill="#fff" fill-opacity="0.01"/><path d="M1408,481L1423,486L1413,491Z" fill="#000" fill-opacity="0.02"/><path d="M1413,491L1423,486L1419,496Z" fill="#fff" fill-opacity="0.01"/><path d="M1413,491L1419,496L1410,500Z" fill="#fff" fill-opacity="0.02"/><path d="M1410,500L1421,508L1412,506Z" fill="#fff" fill-opacity="0.03"/><path d="M1412,506L1421,508L1418,518Z" fill="#000" fill-opacity="0.01"/><path d="M1406,516L1418,518L1421,527Z" fill="#fff" fill-opacity="0.01"/><path d="M1407,525L1421,527L1422,541Z" fill="#fff" fill-opacity="0.06"/><path d="M1409,540L1422,541L1420,551Z" fill="#fff" fill-opacity="0.04"/><path d="M1408,548L1420,551L1421,560Z" fill="#fff" fill-opacity="0.01"/><path d="M1408,548L1421,560L1406,556Z" fill="#000" fill-opacity="0.02"/><path d="M1406,556L1421,560L1419,571Z" fill="#fff" fill-opacity="0.05"/><path d="M1406,556L1419,571L1414,565Z" fill="#fff" fill-opacity="0.01"/><path d="M1414,565L1419,571L1421,581Z" fill="#000" fill-opacity="0.02"/><path d="M1414,565L1421,581L1410,580Z" fill="#fff" fill-opacity="0.04"/><path d="M1424,330L1432,327L1436,336Z" fill="#fff" fill-opacity="0.01"/><path d="M1421,340L1436,336L1432,349Z" fill="#000" fill-opacity="0.02"/><path d="M1421,340L1432,349L1425,350Z" fill="#000" fill-opacity="0.03"/><path d="M1425,350L1438,357L1426,355Z" fill="#fff" fill-opacity="0.04"/><path d="M1426,355L1438,357L1431,367Z" fill="#000" fill-opacity="0.01"/><path d="M1426,355L1431,367L1426,367Z" fill="#000" fill-opacity="0.01"/><path d="M1426,367L1438,376L1424,376Z" fill="#000" fill-opacity="0.02"/><path d="M1424,376L1438,376L1435,387Z" fill="#fff" fill-opacity="0.01"/><path d="M1424,376L1435,387L1425,385Z" fill="#fff" fill-opacity="0.05"/><path d="M1425,385L1435,387L1435,396Z" fill="#fff" fill-opacity="0.05"/><path d="M1425,385L1435,396L1423,396Z" fill="#000" fill-opacity="0.03"/><path d="M1423,396L1435,396L1435,411Z" fill="#fff" fill-opacity="0.02"/><path d="M1423,396L1435,411L1421,407Z" fill="#fff" fill-opacity="0.02"/><path d="M1421,407L1435,411L1437,419Z" fill="#000" fill-opacity="0.01"/><path d="M1421,407L1437,419L1423,420Z" fill="#000" fill-opacity="0.03"/><path d="M1423,420L1437,419L1434,428Z" fill="#000" fill-opacity="0.02"/><path d="M1423,420L1434,428L1421,429Z" fill="#fff" fill-opacity="0.04"/><path d="M1421,429L1434,428L1431,440Z" fill="#fff" fill-opacity="0.04"/><path d="M1421,429L1431,440L1421,436Z" fill="#fff" fill-opacity="0.04"/><path d="M1421,436L1431,440L1436,448Z" fill="#fff" fill-opacity="0.06"/><path d="M1421,436L1436,448L1425,447Z" fill="#fff" fill-opacity="0.04"/><path d="M1425,447L1436,448L1435,457Z" fill="#fff" fill-opacity="0.03"/><path d="M1425,447L1435,457L1419,457Z" fill="#fff" fill-opacity="0.02"/><path d="M1419,457L1435,457L1433,466Z" fill="#000" fill-opacity="0.02"/><path d="M1419,457L1433,466L1424,466Z" fill="#000" fill-opacity="0.02"/><path d="M1424,466L1435,479L1424,478Z" fill="#000" fill-opacity="0.02"/><path d="M1424,478L1435,479L1434,485Z" fill="#000" fill-opacity="0.02"/><path d="M1423,486L1434,485L1435,498Z" fill="#fff" fill-opacity="0.06"/><path d="M1423,486L1435,498L1419,496Z" fill="#000" fill-opacity="0.02"/><path d="M1419,496L1435,498L1435,509Z" fill="#fff" fill-opacity="0.04"/><path d="M1419,496L1435,509L1421,508Z" fill="#fff" fill-opacity="0.03"/><path d="M1421,508L1435,509L1437,516Z" fill="#fff" fill-opacity="0.05"/><path d="M1421,508L1437,516L1418,518Z" fill="#000" fill-opacity="0.03"/><path d="M1418,518L1437,516L1434,531Z" fill="#fff" fill-opacity="0.05"/><path d="M1421,527L1436,537L1422,541Z" fill="#fff" fill-opacity="0.06"/><path d="M1422,541L1436,537L1436,551Z" fill="#000" fill-opacity="0.02"/><path d="M1422,541L1436,551L1420,551Z" fill="#fff" fill-opacity="0.04"/><path d="M1420,551L1436,551L1433,561Z" fill="#fff" fill-opacity="0.05"/><path d="M1421,560L1433,561L1431,571Z" fill="#fff" fill-opacity="0.02"/><path d="M1421,560L1431,571L1419,571Z" fill="#fff" fill-opacity="0.05"/><path d="M1419,571L1431,571L1434,576Z" fill="#000" fill-opacity="0.01"/><path d="M1419,571L1434,576L1421,581Z" fill="#fff" fill-opacity="0.05"/><path d="M1432,327L1450,340L1436,336Z" fill="#fff" fill-opacity="0.04"/><path d="M1436,336L1450,340L1448,348Z" fill="#fff" fill-opacity="0.04"/><path d="M1432,349L1450,355L1438,357Z" fill="#fff" fill-opacity="0.02"/><path d="M1438,357L1449,369L1431,367Z" fill="#fff" fill-opacity="0.05"/><path d="M1431,367L1449,369L1444,380Z" fill="#000" fill-opacity="0.02"/><path d="M1431,367L1444,380L1438,376Z" fill="#fff" fill-opacity="0.02"/><path d="M1438,376L1444,380L1446,388Z" fill="#fff" fill-opacity="0.05"/><path d="M1438,376L1446,388L1435,387Z" fill="#000" fill-opacity="0.03"/><path d="M1435,387L1446,388L1449,396Z" fill="#fff" fill-opacity="0.04"/><path d="M1435,387L1449,396L1435,396Z" fill="#000" fill-opacity="0.02"/><path d="M1435,396L1444,409L1435,411Z" fill="#000" fill-opacity="0.02"/><path d="M1435,411L1443,418L1437,419Z" fill="#000" fill-opacity="0.02"/><path d="M1437,419L1443,418L1448,428Z" fill="#fff" fill-opacity="0.03"/><path d="M1434,428L1448,428L1444,440Z" fill="#000" fill-opacity="0.02"/><path d="M1431,440L1444,440L1449,450Z" fill="#000" fill-opacity="0.01"/><path d="M1431,440L1449,450L1436,448Z" fill="#000" fill-opacity="0.01"/><path d="M1436,448L1446,461L1435,457Z" fill="#fff" fill-opacity="0.06"/><path d="M1435,457L1446,461L1448,466Z" fill="#fff" fill-opacity="0.06"/><path d="M1435,457L1448,466L1433,466Z" fill="#000" fill-opacity="0.02"/><path d="M1433,466L1448,466L1445,475Z" fill="#000" fill-opacity="0.03"/><path d="M1433,466L1445,475L1435,479Z" fill="#fff" fill-opacity="0.04"/><path d="M1435,479L1445,475L1442,487Z" fill="#fff" fill-opacity="0.06"/><path d="M1435,479L1442,487L1434,485Z" fill="#000" fill-opacity="0.02"/><path d="M1434,485L1442,487L1449,500Z" fill="#000" fill-opacity="0.02"/><path d="M1434,485L1449,500L1435,498Z" fill="#000" fill-opacity="0.02"/><path d="M1435,509L1443,506L1445,520Z" fill="#000" fill-opacity="0.02"/><path d="M1435,509L1445,520L1437,516Z" fill="#000" fill-opacity="0.03"/><path d="M1434,531L1443,541L1436,537Z" fill="#000" fill-opacity="0.02"/><path d="M1436,537L1443,541L1444,549Z" fill="#fff" fill-opacity="0.04"/><path d="M1436,537L1444,549L1436,551Z" fill="#fff" fill-opacity="0.02"/><path d="M1436,551L1449,560L1433,561Z" fill="#fff" fill-opacity="0.02"/><path d="M1433,561L1444,569L1431,571Z" fill="#000" fill-opacity="0.03"/><path d="M1431,571L1444,569L1445,575Z" fill="#000" fill-opacity="0.03"/><path d="M1431,571L1445,575L1434,576Z" fill="#fff" fill-opacity="0.03"/></g>
<path d="M1077,408 C1080,425 1088,445 1100,460 C1112,474 1130,487 1150,496 C1170,504 1200,510 1233,512 C1280,513 1320,509 1350,501 C1380,492 1400,478 1416,461 C1425,450 1432,436 1438.5,424.6" stroke="#ededed" stroke-width="2.5" fill="none"/>
<path d="M1077,408 C1080,425 1088,445 1100,460 C1112,474 1130,487 1150,496 C1170,504 1200,510 1233,512 C1280,513 1320,509 1350,501 C1380,492 1400,478 1416,461 C1425,450 1432,436 1438.5,424.6" stroke="#bdbdbd" stroke-width="1.2" fill="none" transform="translate(0,2.5)"/>
<!-- side icons -->
<g fill="none" stroke="#4e4e4e" stroke-width="2.2">
 <path d="M1670,359.5 H1728 Q1732,359.5 1732.3,363.5 L1733,383 Q1733,387 1729,387 H1671 Q1667,387 1666.7,383 L1666,363.5 Q1666,359.5 1670,359.5Z"/>
 <path d="M1682,366 L1718,381 M1717,366 L1683,381" stroke-width="2.8"/>
 <path d="M1675,400.5 H1735 Q1739,400.5 1739.2,404.5 L1739.5,425 Q1739.5,429 1735.5,429 H1676 Q1672,429 1671.8,425 L1671,404.5 Q1671,400.5 1675,400.5Z"/>
 <path d="M1702,403.5 L1731,406.5 L1727,418 L1698,414.5Z" stroke-width="1.8"/>
 <path d="M1685,424 H1729" stroke-width="2.8" stroke-linecap="round"/>
 <path d="M1680,442.5 H1741 Q1745,442.5 1745.2,446.5 L1745.5,469 Q1745.5,473 1741.5,473 H1681 Q1677,473 1676.8,469 L1676,446.5 Q1676,442.5 1680,442.5Z"/>
 <path d="M1686,447H1731V454H1686Z M1688,457.5H1698V469H1688Z M1708,457.5H1734V462.5H1708Z M1708,465H1735V469.5H1708Z" stroke-width="1.8"/>
 <path d="M1686,487.5 H1748 Q1752,487.5 1752.3,491.5 L1753,514 Q1753,518 1749,518 H1687 Q1683,518 1682.8,514 L1682,491.5 Q1682,487.5 1686,487.5Z"/>
 <path d="M1703,499 V495 Q1703,490 1711,490 Q1718,490 1719,495" stroke-width="2.4"/>
 <path d="M1689.7,532.5 H1757 Q1761,532.5 1761.3,536.5 L1762,562 Q1762,566 1758,566 H1691 Q1687,566 1686.7,562 L1685.7,536.5 Q1685.7,532.5 1689.7,532.5Z"/>
</g>
<path d="M1700,498.5 H1733 Q1734.5,498.5 1734.5,500 V510 Q1734.5,512 1732.5,512 H1702 Q1700,512 1700,510Z" fill="#4e4e4e"/>
<path d="M1699,549 L1708.5,539.5 H1738 L1747.5,549 L1738,558.5 H1708.5Z" fill="#dadada" stroke="#4e4e4e" stroke-width="2.4" stroke-linejoin="round"/>
<ellipse cx="1723" cy="549" rx="7.5" ry="4.5" fill="none" stroke="#4e4e4e" stroke-width="2.2"/>
<path d="M1688,414 L1697,410 L1693,418Z" fill="#4e4e4e"/>
<path d="M1687,419 L1697,413" stroke="#4e4e4e" stroke-width="2"/>
<text x="1679" y="408" font-family="Liberation Sans" font-size="6" font-weight="bold" fill="#4e4e4e" textLength="19" lengthAdjust="spacingAndGlyphs">AUTO</text>
</svg>
<!-- collapse btn -->
<div class="a" style="left:661px;top:67px;width:21px;height:20px;background:#f4f4f4"></div>
<svg class="a" style="left:665px;top:71px" width="14" height="12" viewBox="0 0 14 12"><path d="M4 2L1 6L4 10M10 2L13 6L10 10" stroke="#444" stroke-width="1.1" fill="none"/><path d="M7 1V11" stroke="#888" stroke-width="1.2"/></svg>
<!-- camera btn -->
<div class="a" style="left:799px;top:983px;width:34px;height:34px;border-radius:17px;background:#f8f8f8"></div>
<svg class="a" style="left:806px;top:990px" width="20" height="20" viewBox="0 0 20 20"><path d="M1 6V2.5Q1 1 2.5 1H6M14 1H17.5Q19 1 19 2.5V6M19 14V17.5Q19 19 17.5 19H14M6 19H2.5Q1 19 1 17.5V14" stroke="#555" stroke-width="1.5" fill="none"/><path d="M10 4.5L14.5 7V12.5L10 15L5.5 12.5V7Z M5.5 7L10 9.5L14.5 7M10 9.5V15" stroke="#555" stroke-width="1.4" fill="none" stroke-linejoin="round"/></svg>
<!-- view cube -->
<svg class="a" style="left:680px;top:915px" width="100" height="110" viewBox="680 915 100 110">
 <path d="M694,924 H758 V1011 H694Z" fill="#c8c8c8"/>
 <path d="M694,924 H758 V947 H694Z" fill="#cdcdcd"/>
 <text x="708" y="943" font-family="Liberation Sans" font-size="9" fill="#555" textLength="36" lengthAdjust="spacingAndGlyphs">トップ</text>
 <text x="713" y="988" font-family="Liberation Sans" font-size="12" font-weight="bold" fill="#444" textLength="25" lengthAdjust="spacingAndGlyphs">正面</text>
 <path d="M693.5,1011 V962" stroke="#7d7ad0" stroke-width="2.2"/>
 <path d="M688,963 L693.5,950 L699,963Z" fill="#7d7ad0"/>
 <path d="M693.5,1011 H750" stroke="#d07878" stroke-width="2.2"/>
 <path d="M750,1005.5 L763,1011 L750,1016.5Z" fill="#d07878"/>
 <text x="688" y="944" font-family="Liberation Sans" font-size="9" fill="#8a88d0">Z</text>
 <text x="773" y="1015" font-family="Liberation Sans" font-size="9" fill="#c07070">X</text>
</svg>
<!-- toolbar -->
<div id="tb" class="a" style="left:800px;top:67px;width:1022px;height:50px;background:#f8f8f8"></div>
<svg class="a" style="left:800px;top:67px" width="1022" height="50" viewBox="800 67 1022 50">
<g fill="none" stroke-linejoin="round">
 <!-- 1 add cube -->
 <g stroke="#333" stroke-width="1.6">
  <path d="M806,86 H828 V106 H806Z M806,86 L817,75.5 H837.5 L828,86 M837.5,75.5 V96"/>
  <circle cx="836" cy="98.5" r="7" fill="#f8f8f8"/>
  <path d="M836,94 V103 M831.5,98.5 H840.5" stroke-width="1.3"/>
 </g>
 <!-- 2 add plate grid -->
 <g stroke="#333" stroke-width="1.1">
  <path d="M851,76.5 H880.5 V105.5 H851Z M851,82.5H880.5 M851,88.5H880.5 M851,94.5H880.5 M851,100.5H880.5 M857,76.5V105.5 M863,76.5V105.5 M869,76.5V105.5 M875,76.5V105.5"/>
  <circle cx="878" cy="99.5" r="7" fill="#f8f8f8" stroke-width="1.5"/>
  <path d="M878,95 V104 M873.5,99.5 H882.5"/>
 </g>
 <!-- 3 auto orient -->
 <g stroke="#333" stroke-width="1.4">
  <path d="M913.5,79.5 L929,84 L925,98.5 L910,94Z"/>
  <path d="M901,104.5 H928.5 Q930,104.5 930,106 Q930,107.5 928.5,107.5 H901 Q899.5,107.5 899.5,106 Q899.5,104.5 901,104.5Z" stroke-width="1.1"/>
  <path d="M906,92 L901,96.5" stroke-width="1.3"/>
  <path d="M897.5,96 L901,104 L905,98Z" stroke-width="1.3"/>
 </g>
 <text x="896" y="87" font-family="Liberation Sans" font-size="6" font-weight="bold" fill="#333" textLength="16" lengthAdjust="spacingAndGlyphs">AUTO</text>
 <!-- 4 arrange -->
 <g stroke="#333" stroke-width="1.7">
  <path d="M940.5,76.5 H971.5 V107 H940.5Z"/>
  <path d="M945,79.5 H968 V88 H945Z M945,91 H952 V104 H945Z M955,91 H968.5 V96.5 H955Z M955,98.5 H968.5 V104 H955Z" stroke-width="1.3"/>
 </g>
 <!-- 5 lines faded -->
 <g stroke="#c4c4c4" stroke-width="1.5">
  <path d="M987,80.5H1015 M987,84H1015 M987,87.5H1015"/>
  <path d="M987.5,91 H1014.5 V95.5 H987.5Z M987.5,98 H1014.5 V102 H987.5Z M987.5,104 H1014.5 V106 H987.5Z" stroke-width="1.2"/>
 </g>
 <path d="M1032.5,76 V107.5" stroke="#999" stroke-width="1.5"/>
 <!-- 6 move -->
 <g stroke="#c4c4c4" stroke-width="1.3">
  <path d="M1068.5,75.5 L1063,81.5 H1066.5 V85.5 H1070.5 V81.5 H1074Z M1068.5,109 L1063,103 H1066.5 V99 H1070.5 V103 H1074Z M1051.5,92 L1057.5,86.5 V90 H1061.5 V94 H1057.5 V97.5Z M1085.5,92 L1079.5,86.5 V90 H1075.5 V94 H1079.5 V97.5Z"/>
  <path d="M1066,89.5 H1071 V94.5 H1066Z"/>
 </g>
 <!-- 7 rotate -->
 <g stroke="#c4c4c4" stroke-width="1.3">
  <path d="M1112,86 L1123,97 L1112,108.5 L1101,97Z"/>
  <path d="M1097,95 A16,16 0 0 1 1118,80.5"/>
  <path d="M1117,86 L1127.5,80 L1127,90Z"/>
 </g>
 <!-- 8 scale -->
 <g stroke="#c4c4c4" stroke-width="1.3">
  <path d="M1140,93 H1158 V107.5 H1140Z"/>
  <path d="M1140,91 V77 H1172 V107.5 H1160" stroke-dasharray="2.5,2.5"/>
  <path d="M1159,90 L1167,82 M1162,82 H1167 V87"/>
 </g>
 <!-- 9 lay on face -->
 <g stroke="#c4c4c4" stroke-width="1.3">
  <path d="M1199,79.5 L1217,84 L1213.5,102 L1196,98Z"/>
  <path d="M1187.5,107 H1216" stroke-width="2.2" stroke-linecap="round"/>
  <path d="M1193,96 L1189,100 M1185,98 L1188,104 L1193,101Z"/>
 </g>
 <!-- 10 cut -->
 <g stroke="#c4c4c4" stroke-width="1.3">
  <path d="M1230.5,77 H1258.5 V91 H1230.5Z M1230.5,96 H1258.5 V107 H1230.5Z"/>
  <path d="M1230,93.5 H1259" stroke-dasharray="1.5,1.5"/>
 </g>
 <!-- 11 boolean -->
 <g stroke="#c4c4c4" stroke-width="1.3">
  <path d="M1273,87 H1296 V107 H1273Z M1281,77 H1304 V98 H1281Z"/>
  <path d="M1282,88 H1295 V97 H1282Z" fill="#e0e0e0" stroke="none"/>
 </g>
 <!-- 12 support paint -->
 <g stroke="#c4c4c4" stroke-width="1.3">
  <path d="M1320,97 H1350 V107 H1320Z M1327,90 H1347 V97"/>
  <path d="M1330,77 L1346,82 L1343.5,89 L1328,84Z M1320,86 L1325,98 L1330,90Z"/>
 </g>
 <!-- 13 paint bucket -->
 <g stroke="#c4c4c4" stroke-width="1.3">
  <path d="M1361,93 L1376,80 L1391,93 L1376,107Z M1361,93 H1391"/>
  <path d="M1365,76 L1377,89" stroke-width="2"/>
  <path d="M1390,100 Q1394,106 1390.5,109 Q1387,106 1390,100Z"/>
 </g>
 <!-- 14 text Ta (dark) -->
 <g stroke="#333" stroke-width="1.3">
  <path d="M1405.5,77 H1429.5 V82.5 H1420.5 V106 H1414.5 V82.5 H1405.5Z"/>
 </g>
 <text x="1422.5" y="107" font-family="Liberation Sans" font-size="19" fill="#f8f8f8" stroke="#333" stroke-width="1.1" textLength="14" lengthAdjust="spacingAndGlyphs">a</text>
 <!-- 15 support painting faded -->
 <g stroke="#c4c4c4" stroke-width="1.3">
  <path d="M1450,77 H1481 V107 H1467 V91 H1450Z M1450,91 V107 H1466"/>
  <path d="M1452,97 L1458,91 M1452,103 L1464,91 M1455,106 L1465,96" stroke-width="1"/>
 </g>
 <!-- 16 seam cube -->
 <g stroke="#c4c4c4" stroke-width="1.3">
  <path d="M1494,86 H1514 V107 H1494Z M1494,86 L1503,77 H1524 L1514,86 M1524,77 V98 L1514,107"/>
  <path d="M1500,87 L1502,95 L1506,100 L1505,106" stroke-dasharray="2,1.5"/>
 </g>
 <!-- 17 measure -->
 <g stroke="#c4c4c4" stroke-width="1.3">
  <path d="M1542,81 H1563 V103 H1542Z"/>
  <circle cx="1541" cy="80" r="3"/><circle cx="1564" cy="80" r="3"/><circle cx="1541" cy="104" r="3"/><circle cx="1564" cy="104" r="3"/>
 </g>
 <!-- 18 layers -->
 <g stroke="#c4c4c4" stroke-width="1.3">
  <path d="M1582,86 H1603 V107 H1582Z M1582,86 L1590,78 H1612 L1603,86 M1612,78 V99 L1603,107"/>
  <path d="M1583,91 Q1587,89 1591,91 T1600,91 M1583,96 Q1587,94 1591,96 T1600,96 M1583,101 Q1587,99 1591,101 T1600,101"/>
 </g>
 <!-- 19 doc 0 -->
 <g stroke="#c4c4c4" stroke-width="1.3">
  <path d="M1625.5,77 H1640 L1644,81 V103 H1625.5Z"/>
  <path d="M1629.5,81.5 H1647 L1654.5,88 V107.5 H1629.5Z" fill="#f8f8f8"/>
  <ellipse cx="1641.5" cy="95" rx="4.5" ry="6.5"/>
 </g>
 <!-- 20 doc P -->
 <g stroke="#c4c4c4" stroke-width="1.3">
  <path d="M1669.5,77 H1684 L1688,81 V103 H1669.5Z"/>
  <path d="M1673.5,81.5 H1691 L1698.5,88 V107.5 H1673.5Z" fill="#f8f8f8"/>
  <path d="M1681,103 V88.5 H1686 Q1691,88.5 1691,93 Q1691,97.5 1686,97.5 H1681"/>
 </g>
 <!-- 21 ruler -->
 <g stroke="#c4c4c4" stroke-width="1.3">
  <path d="M1713,99 L1736,76 L1745,85 L1722,108Z"/>
  <path d="M1733,80 L1736,83 M1729,84 L1731,86 M1725,88 L1728,91 M1721,92 L1723,94 M1717,96 L1720,99"/>
 </g>
 <path d="M1760.5,76 V107.5" stroke="#999" stroke-width="1.5"/>
 <!-- 22 puzzle dark -->
 <g stroke="#333" stroke-width="1.5">
  <path d="M1781,83.5 H1792 M1781,83.5 V107 H1805 V95.5"/>
  <path d="M1781,95.5 H1786 Q1788,92.5 1791,95.5 H1793 V100 Q1790,102 1793,104 V107"/>
  <path d="M1793,83.5 V88 Q1796,90 1793,92 V95.5 H1797 Q1799,98.5 1802,95.5 H1805"/>
  <path d="M1800,84 L1806,78 Q1804,75 1807,74 Q1810,74 1810,77 L1815,82 L1809,88 Q1811,91 1808,91.5 Q1805,92 1805,89 L1800,84Z" stroke-width="1.4"/>
 </g>
</g>
</g>
</svg>
<div id="divl" class="a"></div><div class="a" style="left:0;top:67px;width:1px;height:965px;background:#9a9a9a"></div>
<div id="divr" class="a"></div>
<script>
function fitAll(){document.querySelectorAll('.fit').forEach(function(e){var w=parseFloat(getComputedStyle(e).getPropertyValue('--w'));if(!w)return;e.style.transform='none';var r=e.getBoundingClientRect().width;if(r>0){e.style.transformOrigin='0 50%';e.style.transform='scaleX('+(w/r)+')';}});}
fitAll();
if(document.fonts&&document.fonts.ready){document.fonts.ready.then(fitAll);}
window.addEventListener('load',fitAll);
</script>
</body></html>
